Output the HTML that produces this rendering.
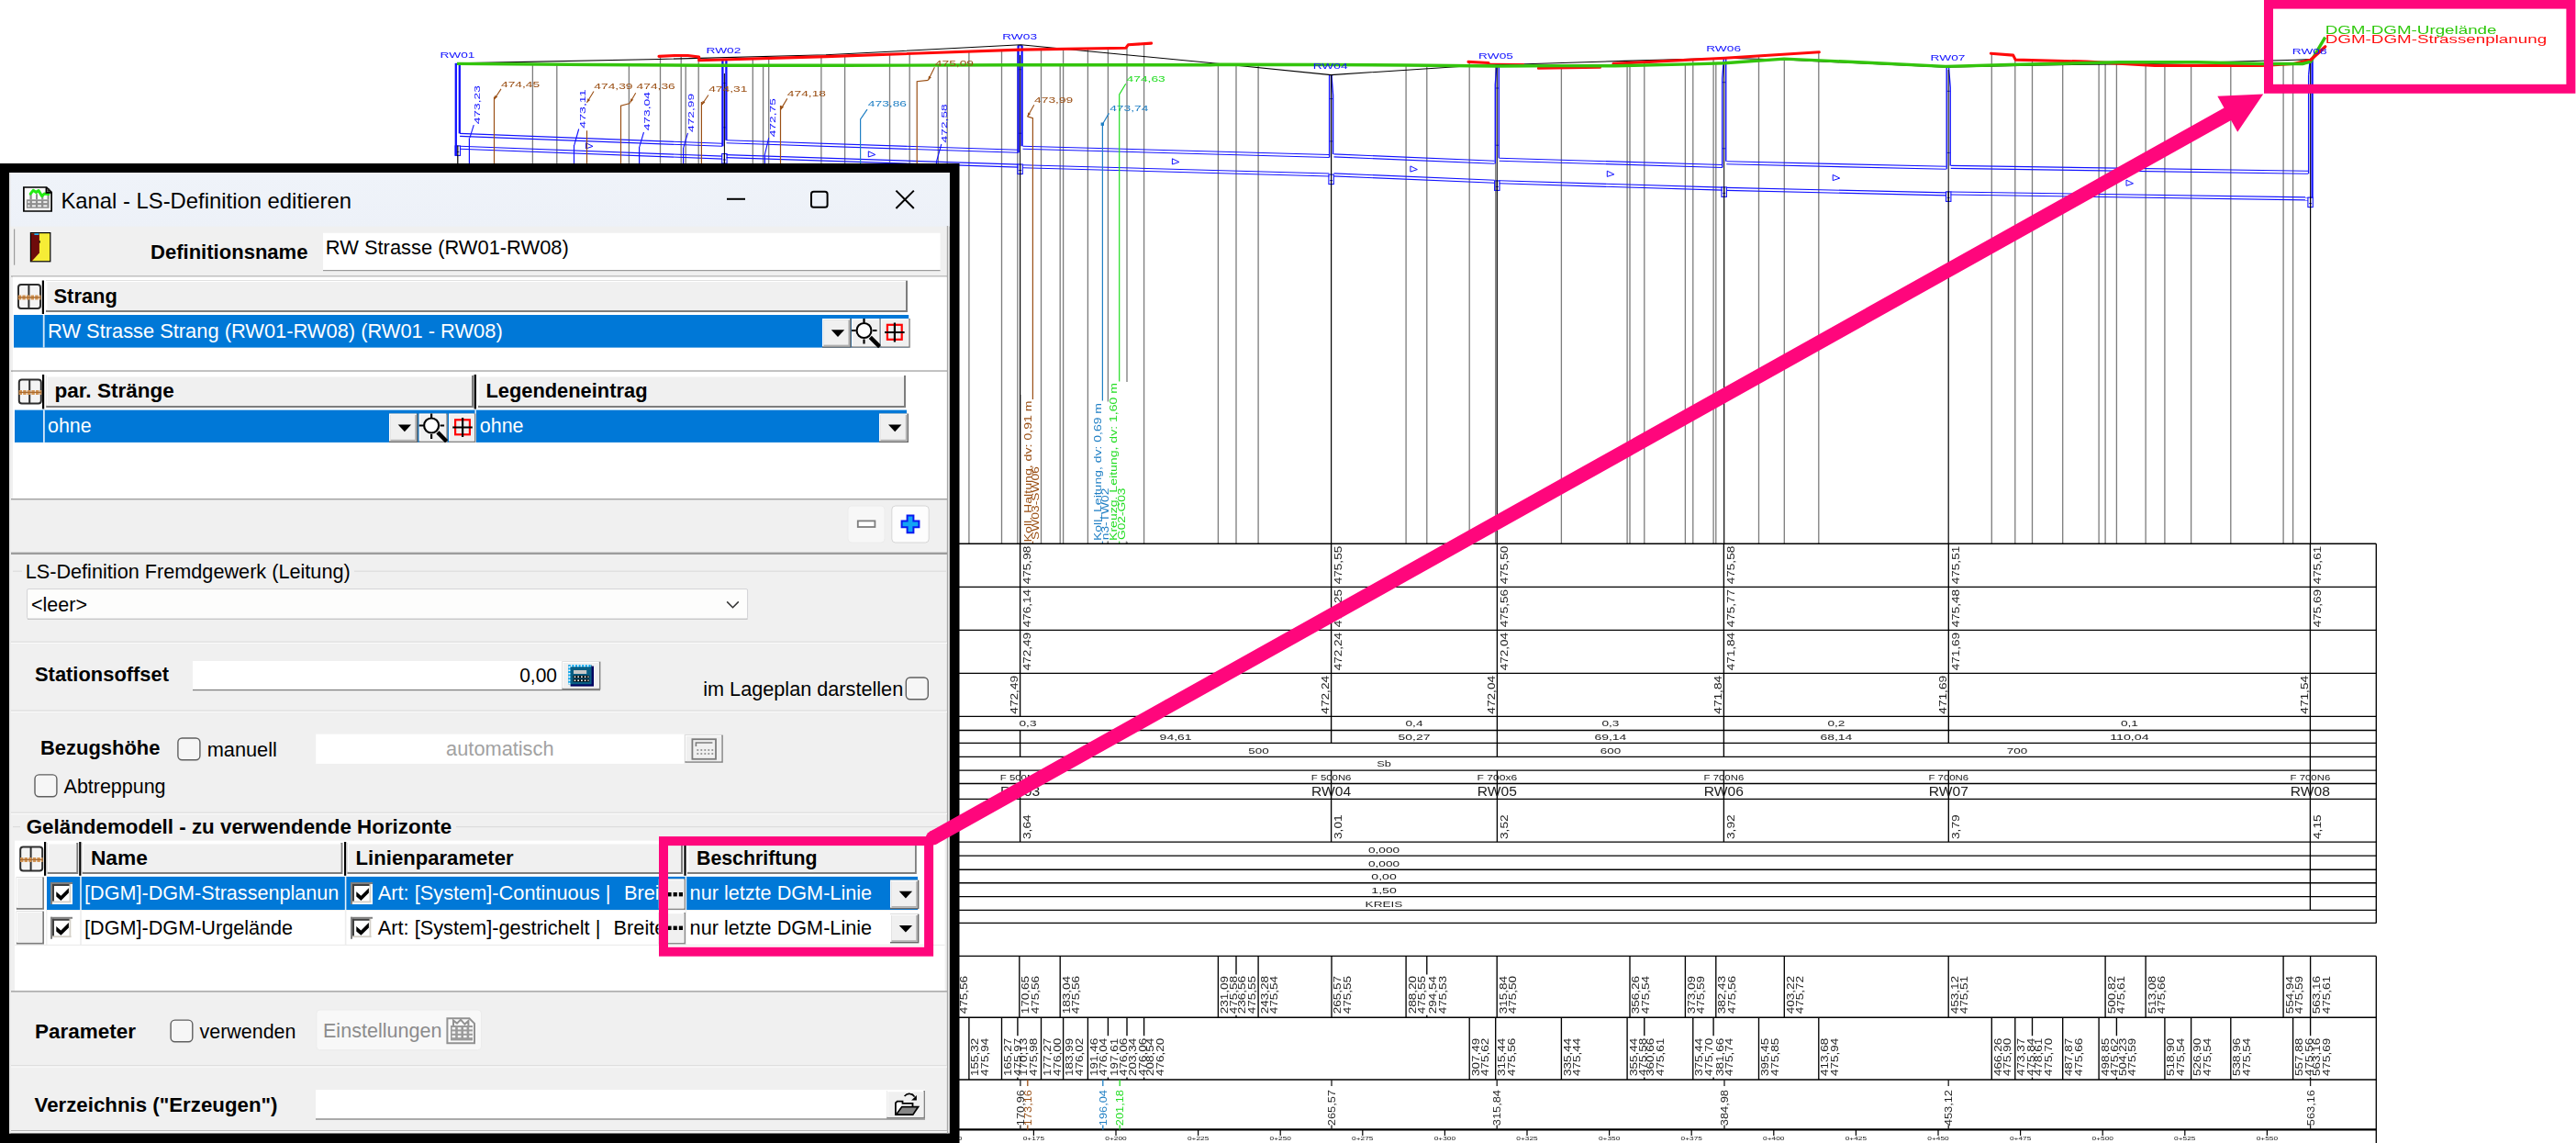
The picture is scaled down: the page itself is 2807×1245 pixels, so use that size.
<!DOCTYPE html>
<html><head><meta charset="utf-8"><title>Kanal - LS-Definition editieren</title>
<style>
html,body{margin:0;padding:0;background:#fff;}
body{width:2807px;height:1245px;overflow:hidden;position:relative;font-family:"Liberation Sans",sans-serif;}
svg{position:absolute;left:0;top:0;display:block;}
svg text{font-family:"Liberation Sans",sans-serif;white-space:pre;}
</style></head><body>
<svg width="2807" height="1245" viewBox="0 0 2807 1245" xml:space="preserve">
<rect x="0" y="0" width="2807" height="1245" fill="#fff"/>
<defs><filter id="ga" x="0" y="0" width="2807" height="1245" filterUnits="userSpaceOnUse"><feOffset dx="0" dy="0"/></filter></defs>
<g id="cad" fill="none" filter="url(#ga)">
<path d="M580.4 70.0V592.2M606.8 70.2V592.2M685.4 70.7V592.2M719.5 61.3V592.2M742.2 60.5V592.2M747.2 71.1V592.2M761.2 61.9V592.2M820.3 64.0V592.2M831.6 71.3V592.2M837.7 63.5V592.2M894.9 61.8V592.2M920.6 60.9V592.2M969.5 59.1V592.2M991.2 58.4V592.2M1022.3 71.0V592.2M1032.2 70.9V592.2M1155.2 70.7V592.2M1327.4 70.4V592.2M1347.0 70.3V592.2M1371.1 70.4V592.2M1532.1 71.0V592.2M1554.8 71.2V592.2M1776.0 71.4V592.2M1836.4 70.0V592.2M1869.8 69.0V592.2M1944.3 64.1V592.2M2294.1 68.2V592.2M2338.1 67.8V592.2M2488.1 69.5V592.2M1055.9 56.1V592.2M1091.5 54.8V592.2M1108.9 54.2V592.2M1134.5 53.8V592.2M1158.6 53.4V592.2M1185.4 52.9V592.2M1207.4 52.6V592.2M1228.0 50.6V592.2M1246.6 47.6V592.2M1601.2 67.5V592.2M1629.7 72.0V592.2M1701.4 73.9V592.2M1773.1 68.6V592.2M1791.8 67.7V592.2M1844.8 65.0V592.2M1867.1 63.8V592.2M1916.5 60.9V592.2M1981.8 56.8V592.2M2170.3 58.3V592.2M2195.8 64.2V592.2M2214.5 65.6V592.2M2247.7 66.4V592.2M2287.1 67.9V592.2M2306.4 69.0V592.2M2358.9 71.4V592.2M2387.6 71.4V592.2M2430.8 71.4V592.2M2498.6 69.5V592.2" stroke="#7c7c7c" stroke-width="1.3" fill="none"/>
<path d="M501.1 145.4L787.1 156.3" stroke="#1212ff" stroke-width="1.15"/>
<path d="M501.1 148.4L787.1 159.3" stroke="#1212ff" stroke-width="1.15"/>
<path d="M501.1 159.2L787.1 170.1" stroke="#1212ff" stroke-width="1.15"/>
<path d="M501.1 162.2L787.1 173.1" stroke="#1212ff" stroke-width="1.15"/>
<path d="M791.5 152.8L1109.6 163.3" stroke="#1212ff" stroke-width="1.15"/>
<path d="M791.5 155.8L1109.6 166.3" stroke="#1212ff" stroke-width="1.15"/>
<path d="M791.5 168.6L1109.6 179.1" stroke="#1212ff" stroke-width="1.15"/>
<path d="M791.5 171.6L1109.6 182.1" stroke="#1212ff" stroke-width="1.15"/>
<path d="M1114.5 159.2L1448.5 168.5" stroke="#1212ff" stroke-width="1.15"/>
<path d="M1114.5 162.2L1448.5 171.5" stroke="#1212ff" stroke-width="1.15"/>
<path d="M1114.5 179.7L1448.5 189.0" stroke="#1212ff" stroke-width="1.15"/>
<path d="M1114.5 182.7L1448.5 192.0" stroke="#1212ff" stroke-width="1.15"/>
<path d="M1453.5 167.9L1628.6 175.3" stroke="#1212ff" stroke-width="1.15"/>
<path d="M1453.5 170.9L1628.6 178.3" stroke="#1212ff" stroke-width="1.15"/>
<path d="M1453.5 188.9L1628.6 196.3" stroke="#1212ff" stroke-width="1.15"/>
<path d="M1453.5 191.9L1628.6 199.3" stroke="#1212ff" stroke-width="1.15"/>
<path d="M1633.6 172.2L1876.9 179.5" stroke="#1212ff" stroke-width="1.15"/>
<path d="M1633.6 175.2L1876.9 182.5" stroke="#1212ff" stroke-width="1.15"/>
<path d="M1633.6 196.8L1876.9 204.1" stroke="#1212ff" stroke-width="1.15"/>
<path d="M1633.6 199.8L1876.9 207.1" stroke="#1212ff" stroke-width="1.15"/>
<path d="M1881.3 175.8L2120.7 181.3" stroke="#1212ff" stroke-width="1.15"/>
<path d="M1881.3 178.8L2120.7 184.3" stroke="#1212ff" stroke-width="1.15"/>
<path d="M1881.3 204.4L2120.7 209.9" stroke="#1212ff" stroke-width="1.15"/>
<path d="M1881.3 207.4L2120.7 212.9" stroke="#1212ff" stroke-width="1.15"/>
<path d="M2125.7 180.4L2515.0 186.3" stroke="#1212ff" stroke-width="1.15"/>
<path d="M2125.7 183.4L2515.0 189.3" stroke="#1212ff" stroke-width="1.15"/>
<path d="M2125.7 209.0L2515.0 214.9" stroke="#1212ff" stroke-width="1.15"/>
<path d="M2125.7 212.0L2515.0 217.9" stroke="#1212ff" stroke-width="1.15"/>
<path d="M638.5 155.7L646.0 159.4L638.5 161.9Z" stroke="#1212ff" stroke-width="1" fill="none"/>
<path d="M946.3 164.8L953.8 168.5L946.3 171.0Z" stroke="#1212ff" stroke-width="1" fill="none"/>
<path d="M1277.4 172.8L1284.9 176.5L1277.4 179.0Z" stroke="#1212ff" stroke-width="1" fill="none"/>
<path d="M1536.9 180.9L1544.4 184.6L1536.9 187.1Z" stroke="#1212ff" stroke-width="1" fill="none"/>
<path d="M1751.3 186.2L1758.8 189.9L1751.3 192.4Z" stroke="#1212ff" stroke-width="1" fill="none"/>
<path d="M1997.2 190.4L2004.7 194.1L1997.2 196.6Z" stroke="#1212ff" stroke-width="1" fill="none"/>
<path d="M2317.0 196.1L2324.5 199.8L2317.0 202.3Z" stroke="#1212ff" stroke-width="1" fill="none"/>
<path d="M496.8 69.4L496.8 169.4" stroke="#1212ff" stroke-width="2.3"/>
<path d="M500.8 69.4L500.8 145.4" stroke="#1212ff" stroke-width="2.3"/>
<path d="M495.8 69.4L501.8 69.4" stroke="#1212ff" stroke-width="1.2"/>
<rect x="496.1" y="158.9" width="5.4" height="10.5" fill="none" stroke="#1212ff" stroke-width="1.1"/>
<path d="M497.3 165.4L500.3 165.4" stroke="#1212ff" stroke-width="1"/>
<path d="M498.8 158.4L498.8 592.2" stroke="#000" stroke-width="1.2"/>
<path d="M787.4 64.5L787.4 159.3" stroke="#1212ff" stroke-width="2.3"/>
<path d="M791.4 64.5L791.4 152.8" stroke="#1212ff" stroke-width="2.3"/>
<path d="M786.9 64.5L791.9 64.5" stroke="#1212ff" stroke-width="1.2"/>
<path d="M787.4 90.5L791.4 90.5" stroke="#1212ff" stroke-width="0.8"/>
<path d="M787.4 138.8L791.4 138.8" stroke="#1212ff" stroke-width="0.8"/>
<rect x="786.7" y="167.5" width="5.4" height="10.5" fill="none" stroke="#1212ff" stroke-width="1.1"/>
<path d="M787.9 174.0L790.9 174.0" stroke="#1212ff" stroke-width="1"/>
<path d="M789.4 167.0L789.4 592.2" stroke="#000" stroke-width="1.2"/>
<path d="M1109.6 49.7L1109.6 166.3" stroke="#1212ff" stroke-width="2.3"/>
<path d="M1113.6 49.7L1113.6 159.2" stroke="#1212ff" stroke-width="2.3"/>
<path d="M1109.1 49.7L1114.1 49.7" stroke="#1212ff" stroke-width="1.2"/>
<path d="M1109.6 75.7L1113.6 75.7" stroke="#1212ff" stroke-width="0.8"/>
<path d="M1109.6 145.2L1113.6 145.2" stroke="#1212ff" stroke-width="0.8"/>
<rect x="1108.9" y="179.0" width="5.4" height="10.5" fill="none" stroke="#1212ff" stroke-width="1.1"/>
<path d="M1110.1 185.5L1113.1 185.5" stroke="#1212ff" stroke-width="1"/>
<path d="M1111.6 178.5L1111.6 592.2" stroke="#000" stroke-width="1.2"/>
<path d="M1448.6 81.6L1448.6 171.5" stroke="#1212ff" stroke-width="1.4"/>
<path d="M1450.9 81.6L1452.6 103.6L1452.6 167.9" stroke="#1212ff" stroke-width="1.4" fill="none"/>
<path d="M1448.1 81.6L1453.1 81.6" stroke="#1212ff" stroke-width="1.2"/>
<path d="M1448.6 107.6L1452.6 107.6" stroke="#1212ff" stroke-width="0.8"/>
<path d="M1448.6 153.9L1452.6 153.9" stroke="#1212ff" stroke-width="0.8"/>
<rect x="1447.9" y="190.1" width="5.4" height="10.5" fill="none" stroke="#1212ff" stroke-width="1.1"/>
<path d="M1449.1 196.6L1452.1 196.6" stroke="#1212ff" stroke-width="1"/>
<path d="M1450.6 81.6L1450.6 592.2" stroke="#000" stroke-width="1.2"/>
<path d="M1631.0 70.0L1629.3 92.0L1629.3 178.3" stroke="#1212ff" stroke-width="1.4" fill="none"/>
<path d="M1633.3 70.0L1633.3 172.2" stroke="#1212ff" stroke-width="1.4"/>
<path d="M1628.8 70.0L1633.8 70.0" stroke="#1212ff" stroke-width="1.2"/>
<path d="M1629.3 96.0L1633.3 96.0" stroke="#1212ff" stroke-width="0.8"/>
<path d="M1629.3 158.2L1633.3 158.2" stroke="#1212ff" stroke-width="0.8"/>
<rect x="1628.6" y="196.9" width="5.4" height="10.5" fill="none" stroke="#1212ff" stroke-width="1.1"/>
<path d="M1629.8 203.4L1632.8 203.4" stroke="#1212ff" stroke-width="1"/>
<path d="M1631.3 196.4L1631.3 592.2" stroke="#000" stroke-width="1.2"/>
<path d="M1878.4 63.7L1876.7 85.7L1876.7 182.5" stroke="#1212ff" stroke-width="1.4" fill="none"/>
<path d="M1880.7 63.7L1880.7 175.8" stroke="#1212ff" stroke-width="1.4"/>
<path d="M1876.2 63.7L1881.2 63.7" stroke="#1212ff" stroke-width="1.2"/>
<path d="M1876.7 89.7L1880.7 89.7" stroke="#1212ff" stroke-width="0.8"/>
<path d="M1876.7 161.8L1880.7 161.8" stroke="#1212ff" stroke-width="0.8"/>
<rect x="1876.0" y="203.9" width="5.4" height="10.5" fill="none" stroke="#1212ff" stroke-width="1.1"/>
<path d="M1877.2 210.4L1880.2 210.4" stroke="#1212ff" stroke-width="1"/>
<path d="M1878.7 203.4L1878.7 592.2" stroke="#000" stroke-width="1.2"/>
<path d="M2121.2 73.3L2121.2 184.3" stroke="#1212ff" stroke-width="1.4"/>
<path d="M2123.5 73.3L2125.2 95.3L2125.2 180.4" stroke="#1212ff" stroke-width="1.4" fill="none"/>
<path d="M2120.7 73.3L2125.7 73.3" stroke="#1212ff" stroke-width="1.2"/>
<path d="M2121.2 99.3L2125.2 99.3" stroke="#1212ff" stroke-width="0.8"/>
<path d="M2121.2 166.4L2125.2 166.4" stroke="#1212ff" stroke-width="0.8"/>
<rect x="2120.5" y="208.9" width="5.4" height="10.5" fill="none" stroke="#1212ff" stroke-width="1.1"/>
<path d="M2121.7 215.4L2124.7 215.4" stroke="#1212ff" stroke-width="1"/>
<path d="M2123.2 208.4L2123.2 592.2" stroke="#000" stroke-width="1.2"/>
<path d="M2515.6 81.9L2515.6 189.3" stroke="#1212ff" stroke-width="1.3"/>
<path d="M2515.6 81.9L2517.1 65.9" stroke="#1212ff" stroke-width="1.3"/>
<path d="M2519.6 65.9L2519.6 215.6" stroke="#1212ff" stroke-width="2.3"/>
<path d="M2514.6 65.9L2520.6 65.9" stroke="#1212ff" stroke-width="1.2"/>
<rect x="2514.9" y="215.1" width="5.4" height="10.5" fill="none" stroke="#1212ff" stroke-width="1.1"/>
<path d="M2516.1 221.6L2519.1 221.6" stroke="#1212ff" stroke-width="1"/>
<path d="M2517.6 214.6L2517.6 592.2" stroke="#000" stroke-width="1.2"/>
<path d="M789.4 80.0L789.4 178.0" stroke="#000" stroke-width="1.0"/>
<path d="M1111.6 60.0L1111.6 190.0" stroke="#000" stroke-width="1.0"/>
<path d="M1631.3 72.0L1631.3 207.0" stroke="#000" stroke-width="1.0"/>
<path d="M1878.7 70.0L1878.7 214.0" stroke="#000" stroke-width="1.0"/>
<path d="M2123.2 76.0L2123.2 219.0" stroke="#000" stroke-width="1.0"/>
<path d="M2517.6 68.0L2517.6 226.0" stroke="#000" stroke-width="1.0"/>
<path d="M498.0 68.9L718.0 64.5L900.0 59.8L1112.3 48.8L1340.0 70.5L1450.4 81.6L1605.6 71.5L1770.0 66.4L1879.4 63.2L1943.8 65.0L2120.2 73.3L2210.0 71.1L2345.7 69.5L2501.4 65.2L2517.0 64.7" stroke="#000" stroke-width="1.1" fill="none"/>
<path d="M718.0 61.4L735.5 60.5L749.5 60.5L761.7 62.0L761.7 65.8L900.0 61.6L1112.3 54.1L1226.7 52.3L1229.3 48.8L1254.6 47.1" stroke="#ff0a0a" stroke-width="3.1" fill="none" stroke-linejoin="round" stroke-linecap="round"/>
<path d="M1600.0 67.4L1622.0 68.5" stroke="#ff0a0a" stroke-width="3.1" fill="none" stroke-linejoin="round" stroke-linecap="round"/>
<path d="M1676.4 74.2L1743.5 73.3" stroke="#ff0a0a" stroke-width="3.1" fill="none" stroke-linejoin="round" stroke-linecap="round"/>
<path d="M1758.0 69.4L1879.4 63.2L1982.3 56.8" stroke="#ff0a0a" stroke-width="3.1" fill="none" stroke-linejoin="round" stroke-linecap="round"/>
<path d="M2169.4 58.2L2193.7 60.1L2196.2 65.1L2273.8 67.1L2348.0 71.4L2465.4 71.4L2499.0 69.5L2518.0 65.2L2533.7 50.8" stroke="#ff0a0a" stroke-width="3.1" fill="none" stroke-linejoin="round" stroke-linecap="round"/>
<path d="M1622.0 69.3L1660.8 69.6" stroke="#ff0a0a" stroke-width="1.2"/>
<path d="M498.0 69.4L650.0 70.5L770.0 71.3L920.0 71.3L1110.0 70.7L1319.0 70.8L1330.0 70.3L1450.0 70.5L1532.0 71.0L1631.0 72.0L1700.0 71.6L1760.0 71.8L1852.0 69.6L1879.0 68.7L1944.0 64.1L2030.0 68.0L2120.0 72.4L2190.0 70.5L2310.0 67.8L2394.0 67.8L2465.0 69.5L2509.0 69.5L2518.0 67.1L2533.7 40.7" stroke="#33c40c" stroke-width="3.4" fill="none" stroke-linejoin="round"/>
<path d="M2518.0 65.2L2533.7 50.8" stroke="#ff0a0a" stroke-width="3.1" fill="none" stroke-linecap="round"/>
<text transform="translate(479.6,62.5)" font-size="9.8" fill="#1212ff" textLength="37.8" lengthAdjust="spacingAndGlyphs">RW01</text>
<text transform="translate(769.5,58.0)" font-size="9.8" fill="#1212ff" textLength="37.8" lengthAdjust="spacingAndGlyphs">RW02</text>
<text transform="translate(1092.2,42.7)" font-size="9.8" fill="#1212ff" textLength="37.8" lengthAdjust="spacingAndGlyphs">RW03</text>
<text transform="translate(1430.7,74.8)" font-size="9.8" fill="#1212ff" textLength="37.8" lengthAdjust="spacingAndGlyphs">RW04</text>
<text transform="translate(1611.1,63.5)" font-size="9.8" fill="#1212ff" textLength="37.8" lengthAdjust="spacingAndGlyphs">RW05</text>
<text transform="translate(1859.2,55.8)" font-size="9.8" fill="#1212ff" textLength="37.8" lengthAdjust="spacingAndGlyphs">RW06</text>
<text transform="translate(2103.6,65.9)" font-size="9.8" fill="#1212ff" textLength="37.8" lengthAdjust="spacingAndGlyphs">RW07</text>
<text transform="translate(2497.8,58.7)" font-size="9.8" fill="#1212ff" textLength="37.8" lengthAdjust="spacingAndGlyphs">RW08</text>
<text transform="translate(2533.7,36.6)" font-size="12.3" fill="#2fc80c" textLength="186.8" lengthAdjust="spacingAndGlyphs">DGM-DGM-Urgelände</text>
<text transform="translate(2533.7,47.4)" font-size="12.3" fill="#ff1010" textLength="241.5" lengthAdjust="spacingAndGlyphs">DGM-DGM-Strassenplanung</text>
</g>
<g id="cadlabels" filter="url(#ga)">
<text transform="translate(546.0,95.1)" font-size="9.2" fill="#9a4f14" textLength="42.2" lengthAdjust="spacingAndGlyphs">474,45</text>
<path d="M546.0 96.9L538.5 108.2" stroke="#9a4f14" stroke-width="1.1"/>
<path d="M538.5 108.2L542.2 105.5L539.5 103.7Z" fill="#9a4f14"/>
<path d="M538.5 105.6L538.5 592.0" stroke="#9a4f14" stroke-width="1.2"/>
<text transform="translate(647.3,97.4)" font-size="9.2" fill="#9a4f14" textLength="42.2" lengthAdjust="spacingAndGlyphs">474,39</text>
<path d="M647.0 99.5L639.5 111.7" stroke="#9a4f14" stroke-width="1.1"/>
<path d="M639.5 111.7L643.1 108.9L640.4 107.2Z" fill="#9a4f14"/>
<path d="M639.5 142.3L639.5 592.0" stroke="#9a4f14" stroke-width="1.2"/>
<text transform="translate(693.6,97.4)" font-size="9.2" fill="#9a4f14" textLength="42.2" lengthAdjust="spacingAndGlyphs">474,36</text>
<path d="M692.7 101.2L686.6 111.7" stroke="#9a4f14" stroke-width="1.1"/>
<path d="M686.6 111.7L690.2 108.8L687.4 107.2Z" fill="#9a4f14"/>
<path d="M686.6 112.5L676.5 115.2L676.5 592.0" stroke="#9a4f14" stroke-width="1.2" fill="none"/>
<text transform="translate(772.2,100.4)" font-size="9.2" fill="#9a4f14" textLength="42.2" lengthAdjust="spacingAndGlyphs">474,31</text>
<path d="M771.9 103.5L764.7 114.3" stroke="#9a4f14" stroke-width="1.1"/>
<path d="M764.7 114.3L768.4 111.6L765.7 109.8Z" fill="#9a4f14"/>
<path d="M764.4 111.0L764.4 592.0" stroke="#9a4f14" stroke-width="1.2"/>
<text transform="translate(857.8,105.0)" font-size="9.2" fill="#9a4f14" textLength="42.2" lengthAdjust="spacingAndGlyphs">474,18</text>
<path d="M857.8 107.4L850.5 119.6" stroke="#9a4f14" stroke-width="1.1"/>
<path d="M850.5 119.6L854.1 116.7L851.3 115.1Z" fill="#9a4f14"/>
<path d="M850.5 115.0L850.5 592.0" stroke="#9a4f14" stroke-width="1.2"/>
<text transform="translate(1018.8,72.0)" font-size="9.2" fill="#9a4f14" textLength="42.2" lengthAdjust="spacingAndGlyphs">475,09</text>
<path d="M1018.4 73.3L1011.5 87.3" stroke="#9a4f14" stroke-width="1.1"/>
<path d="M1011.5 87.3L1014.9 84.2L1011.9 82.7Z" fill="#9a4f14"/>
<path d="M1011.5 87.3L999.2 88.7L999.2 592.0" stroke="#9a4f14" stroke-width="1.2" fill="none"/>
<text transform="translate(1127.1,111.7)" font-size="9.2" fill="#9a4f14" textLength="42.2" lengthAdjust="spacingAndGlyphs">473,99</text>
<path d="M1126.8 114.3L1119.6 126.9" stroke="#9a4f14" stroke-width="1.1"/>
<path d="M1119.6 126.9L1123.1 124.0L1120.3 122.4Z" fill="#9a4f14"/>
<path d="M1119.6 126.9L1125.4 128.7L1125.4 435.0" stroke="#9a4f14" stroke-width="1.2" fill="none"/>
<text transform="translate(945.8,116.0)" font-size="9.2" fill="#1f7fc4" textLength="42.2" lengthAdjust="spacingAndGlyphs">473,86</text>
<path d="M945.0 119.2L937.6 130.0L937.6 592.0" stroke="#1f7fc4" stroke-width="1.2" fill="none"/>
<text transform="translate(1209.2,120.8)" font-size="9.2" fill="#1f7fc4" textLength="42.2" lengthAdjust="spacingAndGlyphs">473,74</text>
<path d="M1208.4 123.4L1201.4 135.3L1201.4 436.4" stroke="#1f7fc4" stroke-width="1.2" fill="none"/>
<rect x="1199.6" y="133.5" width="3.4" height="3.4" fill="#1f7fc4"/>
<text transform="translate(1227.6,88.5)" font-size="9.2" fill="#22dd22" textLength="42.2" lengthAdjust="spacingAndGlyphs">474,63</text>
<path d="M1226.7 91.3L1219.7 103.0L1219.7 415.4" stroke="#22dd22" stroke-width="1.2" fill="none"/>
<text transform="translate(523.2,135.3) rotate(-90)" font-size="9.2" fill="#1212ff" textLength="42.2" lengthAdjust="spacingAndGlyphs">473,23</text>
<path d="M516.3 136.2L511.9 150.2" stroke="#1212ff" stroke-width="1.1"/>
<path d="M511.4 150.2L511.4 592.0" stroke="#1212ff" stroke-width="1.2"/>
<text transform="translate(637.6,139.7) rotate(-90)" font-size="9.2" fill="#1212ff" textLength="42.2" lengthAdjust="spacingAndGlyphs">473,11</text>
<path d="M630.7 140.5L625.8 158.0" stroke="#1212ff" stroke-width="1.1"/>
<path d="M625.5 158.0L625.5 592.0" stroke="#1212ff" stroke-width="1.2"/>
<text transform="translate(708.4,142.3) rotate(-90)" font-size="9.2" fill="#1212ff" textLength="42.2" lengthAdjust="spacingAndGlyphs">473,04</text>
<path d="M701.5 144.0L696.8 159.8" stroke="#1212ff" stroke-width="1.1"/>
<path d="M696.6 159.8L696.6 592.0" stroke="#1212ff" stroke-width="1.2"/>
<text transform="translate(756.4,144.0) rotate(-90)" font-size="9.2" fill="#1212ff" textLength="42.2" lengthAdjust="spacingAndGlyphs">472,99</text>
<path d="M749.5 144.9L744.8 160.6" stroke="#1212ff" stroke-width="1.1"/>
<path d="M744.6 160.6L744.6 592.0" stroke="#1212ff" stroke-width="1.2"/>
<text transform="translate(844.6,149.3) rotate(-90)" font-size="9.2" fill="#1212ff" textLength="42.2" lengthAdjust="spacingAndGlyphs">472,75</text>
<path d="M837.7 150.2L833.0 170.2" stroke="#1212ff" stroke-width="1.1"/>
<path d="M833.4 170.2L833.4 592.0" stroke="#1212ff" stroke-width="1.2"/>
<text transform="translate(1032.3,155.4) rotate(-90)" font-size="9.2" fill="#1212ff" textLength="42.2" lengthAdjust="spacingAndGlyphs">472,58</text>
<path d="M1025.8 157.0L1020.5 176.0" stroke="#1212ff" stroke-width="1.1"/>
<path d="M1020.5 176.0L1020.5 592.0" stroke="#1212ff" stroke-width="1.2"/>
<rect x="1114" y="436" width="19" height="154" fill="#fff"/>
<rect x="1189.5" y="437.5" width="19.5" height="152" fill="#fff"/>
<rect x="1208" y="416" width="21" height="174" fill="#fff"/>
<path d="M1111.6 430.0L1111.6 592.0" stroke="#000" stroke-width="1.2"/>
<text transform="translate(1123.6,590.4) rotate(-90)" font-size="10.6" fill="#9a4f14" textLength="154.0" lengthAdjust="spacingAndGlyphs">Koll. Haltung, dv: 0,91 m</text>
<text transform="translate(1132.0,588.0) rotate(-90)" font-size="10.6" fill="#9a4f14" textLength="80.0" lengthAdjust="spacingAndGlyphs">SW03-SW06</text>
<text transform="translate(1199.8,589.0) rotate(-90)" font-size="10.6" fill="#1f7fc4" textLength="150.0" lengthAdjust="spacingAndGlyphs">Koll. Leitung, dv: 0,69 m</text>
<text transform="translate(1208.2,588.2) rotate(-90)" font-size="10.6" fill="#1f7fc4" textLength="56.5" lengthAdjust="spacingAndGlyphs">n3-TW02</text>
<text transform="translate(1217.4,589.0) rotate(-90)" font-size="10.6" fill="#22dd22" textLength="172.0" lengthAdjust="spacingAndGlyphs">Kreuzg. Leitung, dv: 1,60 m</text>
<text transform="translate(1225.8,588.0) rotate(-90)" font-size="10.6" fill="#22dd22" textLength="56.5" lengthAdjust="spacingAndGlyphs">G02-G03</text>
<path d="M1207.2 589.5L1207.2 592.0" stroke="#7c7c7c" stroke-width="1.1"/>
<path d="M1227.3 589.5L1227.3 592.0" stroke="#7c7c7c" stroke-width="1.1"/>
<path d="M1125.4 589.5L1125.4 592.0" stroke="#9a4f14" stroke-width="1.1"/>
<path d="M1201.4 589.5L1201.4 592.0" stroke="#1f7fc4" stroke-width="1.1"/>
<path d="M1219.7 589.5L1219.7 592.0" stroke="#22dd22" stroke-width="1.1"/>
</g>
<g id="table" filter="url(#ga)">
<path d="M400 592.2H2589.3M400 639.3H2589.3M400 686.4H2589.3M400 733.4H2589.3M400 780.3H2589.3M400 795.5H2589.3M400 809.3H2589.3M400 824.3H2589.3M400 839.1H2589.3M400 853.5H2589.3M400 870.3H2589.3M400 917.1H2589.3M400 932.1H2589.3M400 947.2H2589.3M400 961.7H2589.3M400 976.6H2589.3M400 991.3H2589.3M400 1005.4H2589.3M2589.3 592.2V1005.4M498.8 592.2V824.3M498.8 839.1V917.1M789.4 592.2V809.3M789.4 839.1V917.1M1111.6 592.2V780.3M1111.6 795.5V824.3M1111.6 839.1V917.1M1450.6 592.2V809.3M1450.6 839.1V917.1M1631.4 592.2V824.3M1631.4 839.1V917.1M1878.4 592.2V824.3M1878.4 839.1V917.1M2123.3 592.2V809.3M2123.3 839.1V917.1M2517.4 592.2V991.3" stroke="#000" stroke-width="1.35" fill="none"/>
<text transform="translate(1123.3,636.2) rotate(-90)" font-size="10.2" fill="#1c1c1c" textLength="41.4" lengthAdjust="spacingAndGlyphs">475,98</text>
<text transform="translate(1123.3,683.3) rotate(-90)" font-size="10.2" fill="#1c1c1c" textLength="41.4" lengthAdjust="spacingAndGlyphs">476,14</text>
<text transform="translate(1123.3,730.3) rotate(-90)" font-size="10.2" fill="#1c1c1c" textLength="41.4" lengthAdjust="spacingAndGlyphs">472,49</text>
<text transform="translate(1109.3,777.7) rotate(-90)" font-size="10.2" fill="#1c1c1c" textLength="41.8" lengthAdjust="spacingAndGlyphs">472,49</text>
<text transform="translate(1123.3,914.0) rotate(-90)" font-size="10.2" fill="#1c1c1c" textLength="26.6" lengthAdjust="spacingAndGlyphs">3,64</text>
<text transform="translate(1111.6,849.8)" font-size="8.3" fill="#1c1c1c" textLength="43.7" lengthAdjust="spacingAndGlyphs" text-anchor="middle">F 500N6</text>
<text transform="translate(1111.6,866.9)" font-size="14.2" fill="#1c1c1c" textLength="43.1" lengthAdjust="spacingAndGlyphs" text-anchor="middle">RW03</text>
<text transform="translate(1462.3,636.2) rotate(-90)" font-size="10.2" fill="#1c1c1c" textLength="41.4" lengthAdjust="spacingAndGlyphs">475,55</text>
<text transform="translate(1462.3,683.3) rotate(-90)" font-size="10.2" fill="#1c1c1c" textLength="41.4" lengthAdjust="spacingAndGlyphs">475,25</text>
<text transform="translate(1462.3,730.3) rotate(-90)" font-size="10.2" fill="#1c1c1c" textLength="41.4" lengthAdjust="spacingAndGlyphs">472,24</text>
<text transform="translate(1448.3,777.7) rotate(-90)" font-size="10.2" fill="#1c1c1c" textLength="41.8" lengthAdjust="spacingAndGlyphs">472,24</text>
<text transform="translate(1462.3,914.0) rotate(-90)" font-size="10.2" fill="#1c1c1c" textLength="26.6" lengthAdjust="spacingAndGlyphs">3,01</text>
<text transform="translate(1450.6,849.8)" font-size="8.3" fill="#1c1c1c" textLength="43.7" lengthAdjust="spacingAndGlyphs" text-anchor="middle">F 500N6</text>
<text transform="translate(1450.6,866.9)" font-size="14.2" fill="#1c1c1c" textLength="43.1" lengthAdjust="spacingAndGlyphs" text-anchor="middle">RW04</text>
<text transform="translate(1643.1,636.2) rotate(-90)" font-size="10.2" fill="#1c1c1c" textLength="41.4" lengthAdjust="spacingAndGlyphs">475,50</text>
<text transform="translate(1643.1,683.3) rotate(-90)" font-size="10.2" fill="#1c1c1c" textLength="41.4" lengthAdjust="spacingAndGlyphs">475,56</text>
<text transform="translate(1643.1,730.3) rotate(-90)" font-size="10.2" fill="#1c1c1c" textLength="41.4" lengthAdjust="spacingAndGlyphs">472,04</text>
<text transform="translate(1629.1,777.7) rotate(-90)" font-size="10.2" fill="#1c1c1c" textLength="41.8" lengthAdjust="spacingAndGlyphs">472,04</text>
<text transform="translate(1643.1,914.0) rotate(-90)" font-size="10.2" fill="#1c1c1c" textLength="26.6" lengthAdjust="spacingAndGlyphs">3,52</text>
<text transform="translate(1631.4,849.8)" font-size="8.3" fill="#1c1c1c" textLength="43.7" lengthAdjust="spacingAndGlyphs" text-anchor="middle">F 700x6</text>
<text transform="translate(1631.4,866.9)" font-size="14.2" fill="#1c1c1c" textLength="43.1" lengthAdjust="spacingAndGlyphs" text-anchor="middle">RW05</text>
<text transform="translate(1890.1,636.2) rotate(-90)" font-size="10.2" fill="#1c1c1c" textLength="41.4" lengthAdjust="spacingAndGlyphs">475,58</text>
<text transform="translate(1890.1,683.3) rotate(-90)" font-size="10.2" fill="#1c1c1c" textLength="41.4" lengthAdjust="spacingAndGlyphs">475,77</text>
<text transform="translate(1890.1,730.3) rotate(-90)" font-size="10.2" fill="#1c1c1c" textLength="41.4" lengthAdjust="spacingAndGlyphs">471,84</text>
<text transform="translate(1876.1,777.7) rotate(-90)" font-size="10.2" fill="#1c1c1c" textLength="41.8" lengthAdjust="spacingAndGlyphs">471,84</text>
<text transform="translate(1890.1,914.0) rotate(-90)" font-size="10.2" fill="#1c1c1c" textLength="26.6" lengthAdjust="spacingAndGlyphs">3,92</text>
<text transform="translate(1878.4,849.8)" font-size="8.3" fill="#1c1c1c" textLength="43.7" lengthAdjust="spacingAndGlyphs" text-anchor="middle">F 700N6</text>
<text transform="translate(1878.4,866.9)" font-size="14.2" fill="#1c1c1c" textLength="43.1" lengthAdjust="spacingAndGlyphs" text-anchor="middle">RW06</text>
<text transform="translate(2135.0,636.2) rotate(-90)" font-size="10.2" fill="#1c1c1c" textLength="41.4" lengthAdjust="spacingAndGlyphs">475,51</text>
<text transform="translate(2135.0,683.3) rotate(-90)" font-size="10.2" fill="#1c1c1c" textLength="41.4" lengthAdjust="spacingAndGlyphs">475,48</text>
<text transform="translate(2135.0,730.3) rotate(-90)" font-size="10.2" fill="#1c1c1c" textLength="41.4" lengthAdjust="spacingAndGlyphs">471,69</text>
<text transform="translate(2121.0,777.7) rotate(-90)" font-size="10.2" fill="#1c1c1c" textLength="41.8" lengthAdjust="spacingAndGlyphs">471,69</text>
<text transform="translate(2135.0,914.0) rotate(-90)" font-size="10.2" fill="#1c1c1c" textLength="26.6" lengthAdjust="spacingAndGlyphs">3,79</text>
<text transform="translate(2123.3,849.8)" font-size="8.3" fill="#1c1c1c" textLength="43.7" lengthAdjust="spacingAndGlyphs" text-anchor="middle">F 700N6</text>
<text transform="translate(2123.3,866.9)" font-size="14.2" fill="#1c1c1c" textLength="43.1" lengthAdjust="spacingAndGlyphs" text-anchor="middle">RW07</text>
<text transform="translate(2529.1,636.2) rotate(-90)" font-size="10.2" fill="#1c1c1c" textLength="41.4" lengthAdjust="spacingAndGlyphs">475,61</text>
<text transform="translate(2529.1,683.3) rotate(-90)" font-size="10.2" fill="#1c1c1c" textLength="41.4" lengthAdjust="spacingAndGlyphs">475,69</text>
<text transform="translate(2515.1,777.7) rotate(-90)" font-size="10.2" fill="#1c1c1c" textLength="41.8" lengthAdjust="spacingAndGlyphs">471,54</text>
<text transform="translate(2529.1,914.0) rotate(-90)" font-size="10.2" fill="#1c1c1c" textLength="26.6" lengthAdjust="spacingAndGlyphs">4,15</text>
<text transform="translate(2517.4,849.8)" font-size="8.3" fill="#1c1c1c" textLength="43.7" lengthAdjust="spacingAndGlyphs" text-anchor="middle">F 700N6</text>
<text transform="translate(2517.4,866.9)" font-size="14.2" fill="#1c1c1c" textLength="43.1" lengthAdjust="spacingAndGlyphs" text-anchor="middle">RW08</text>
<text transform="translate(1110.5,791.0)" font-size="9.7" fill="#1c1c1c" textLength="19.0" lengthAdjust="spacingAndGlyphs">0,3</text>
<text transform="translate(1541.0,791.0)" font-size="9.7" fill="#1c1c1c" textLength="19.0" lengthAdjust="spacingAndGlyphs" text-anchor="middle">0,4</text>
<text transform="translate(1754.9,791.0)" font-size="9.7" fill="#1c1c1c" textLength="19.0" lengthAdjust="spacingAndGlyphs" text-anchor="middle">0,3</text>
<text transform="translate(2000.9,791.0)" font-size="9.7" fill="#1c1c1c" textLength="19.0" lengthAdjust="spacingAndGlyphs" text-anchor="middle">0,2</text>
<text transform="translate(2320.4,791.0)" font-size="9.7" fill="#1c1c1c" textLength="19.0" lengthAdjust="spacingAndGlyphs" text-anchor="middle">0,1</text>
<text transform="translate(1281.1,805.9)" font-size="9.7" fill="#1c1c1c" textLength="35.0" lengthAdjust="spacingAndGlyphs" text-anchor="middle">94,61</text>
<text transform="translate(1541.0,805.9)" font-size="9.7" fill="#1c1c1c" textLength="35.0" lengthAdjust="spacingAndGlyphs" text-anchor="middle">50,27</text>
<text transform="translate(1754.9,805.9)" font-size="9.7" fill="#1c1c1c" textLength="35.0" lengthAdjust="spacingAndGlyphs" text-anchor="middle">69,14</text>
<text transform="translate(2000.9,805.9)" font-size="9.7" fill="#1c1c1c" textLength="35.0" lengthAdjust="spacingAndGlyphs" text-anchor="middle">68,14</text>
<text transform="translate(2320.4,805.9)" font-size="9.7" fill="#1c1c1c" textLength="42.5" lengthAdjust="spacingAndGlyphs" text-anchor="middle">110,04</text>
<text transform="translate(1371.5,820.7)" font-size="9.7" fill="#1c1c1c" textLength="22.4" lengthAdjust="spacingAndGlyphs" text-anchor="middle">500</text>
<text transform="translate(1754.9,820.7)" font-size="9.7" fill="#1c1c1c" textLength="22.4" lengthAdjust="spacingAndGlyphs" text-anchor="middle">600</text>
<text transform="translate(2197.9,820.7)" font-size="9.7" fill="#1c1c1c" textLength="22.4" lengthAdjust="spacingAndGlyphs" text-anchor="middle">700</text>
<text transform="translate(1508.0,835.2)" font-size="9.7" fill="#1c1c1c" textLength="15.7" lengthAdjust="spacingAndGlyphs" text-anchor="middle">Sb</text>
<text transform="translate(1508.0,928.5)" font-size="9.7" fill="#1c1c1c" textLength="34.2" lengthAdjust="spacingAndGlyphs" text-anchor="middle">0,000</text>
<text transform="translate(1508.0,943.6)" font-size="9.7" fill="#1c1c1c" textLength="34.2" lengthAdjust="spacingAndGlyphs" text-anchor="middle">0,000</text>
<text transform="translate(1508.0,958.1)" font-size="9.7" fill="#1c1c1c" textLength="27.4" lengthAdjust="spacingAndGlyphs" text-anchor="middle">0,00</text>
<text transform="translate(1508.0,973.0)" font-size="9.7" fill="#1c1c1c" textLength="27.4" lengthAdjust="spacingAndGlyphs" text-anchor="middle">1,50</text>
<text transform="translate(1508.0,987.7)" font-size="9.7" fill="#1c1c1c" textLength="40.9" lengthAdjust="spacingAndGlyphs" text-anchor="middle">KREIS</text>
<path d="M400 1041.4H2589.3M400 1108.2H2589.3M400 1176.0H2589.3M2589.3 1041.4V1246" stroke="#000" stroke-width="1.35" fill="none"/>
<path d="M400 1230.4H2589.3" stroke="#000" stroke-width="2.3" fill="none"/>
<text transform="translate(1042.9,1104.2) rotate(-90)" font-size="10.3" fill="#1c1c1c" textLength="41.3" lengthAdjust="spacingAndGlyphs">148,80</text>
<text transform="translate(1053.5,1104.2) rotate(-90)" font-size="10.3" fill="#1c1c1c" textLength="41.3" lengthAdjust="spacingAndGlyphs">475,56</text>
<text transform="translate(1121.2,1104.2) rotate(-90)" font-size="10.3" fill="#1c1c1c" textLength="41.3" lengthAdjust="spacingAndGlyphs">170,65</text>
<text transform="translate(1131.8,1104.2) rotate(-90)" font-size="10.3" fill="#1c1c1c" textLength="41.3" lengthAdjust="spacingAndGlyphs">475,56</text>
<text transform="translate(1165.6,1104.2) rotate(-90)" font-size="10.3" fill="#1c1c1c" textLength="41.3" lengthAdjust="spacingAndGlyphs">183,04</text>
<text transform="translate(1176.2,1104.2) rotate(-90)" font-size="10.3" fill="#1c1c1c" textLength="41.3" lengthAdjust="spacingAndGlyphs">475,56</text>
<text transform="translate(1337.8,1104.2) rotate(-90)" font-size="10.3" fill="#1c1c1c" textLength="41.3" lengthAdjust="spacingAndGlyphs">231,09</text>
<text transform="translate(1348.4,1104.2) rotate(-90)" font-size="10.3" fill="#1c1c1c" textLength="41.3" lengthAdjust="spacingAndGlyphs">475,58</text>
<text transform="translate(1357.4,1104.2) rotate(-90)" font-size="10.3" fill="#1c1c1c" textLength="41.3" lengthAdjust="spacingAndGlyphs">236,56</text>
<text transform="translate(1368.0,1104.2) rotate(-90)" font-size="10.3" fill="#1c1c1c" textLength="41.3" lengthAdjust="spacingAndGlyphs">475,55</text>
<text transform="translate(1381.5,1104.2) rotate(-90)" font-size="10.3" fill="#1c1c1c" textLength="41.3" lengthAdjust="spacingAndGlyphs">243,28</text>
<text transform="translate(1392.1,1104.2) rotate(-90)" font-size="10.3" fill="#1c1c1c" textLength="41.3" lengthAdjust="spacingAndGlyphs">475,54</text>
<text transform="translate(1461.4,1104.2) rotate(-90)" font-size="10.3" fill="#1c1c1c" textLength="41.3" lengthAdjust="spacingAndGlyphs">265,57</text>
<text transform="translate(1472.0,1104.2) rotate(-90)" font-size="10.3" fill="#1c1c1c" textLength="41.3" lengthAdjust="spacingAndGlyphs">475,55</text>
<text transform="translate(1542.5,1104.2) rotate(-90)" font-size="10.3" fill="#1c1c1c" textLength="41.3" lengthAdjust="spacingAndGlyphs">288,20</text>
<text transform="translate(1553.1,1104.2) rotate(-90)" font-size="10.3" fill="#1c1c1c" textLength="41.3" lengthAdjust="spacingAndGlyphs">475,55</text>
<text transform="translate(1565.2,1104.2) rotate(-90)" font-size="10.3" fill="#1c1c1c" textLength="41.3" lengthAdjust="spacingAndGlyphs">294,54</text>
<text transform="translate(1575.8,1104.2) rotate(-90)" font-size="10.3" fill="#1c1c1c" textLength="41.3" lengthAdjust="spacingAndGlyphs">475,53</text>
<text transform="translate(1641.6,1104.2) rotate(-90)" font-size="10.3" fill="#1c1c1c" textLength="41.3" lengthAdjust="spacingAndGlyphs">315,84</text>
<text transform="translate(1652.2,1104.2) rotate(-90)" font-size="10.3" fill="#1c1c1c" textLength="41.3" lengthAdjust="spacingAndGlyphs">475,50</text>
<text transform="translate(1786.4,1104.2) rotate(-90)" font-size="10.3" fill="#1c1c1c" textLength="41.3" lengthAdjust="spacingAndGlyphs">356,26</text>
<text transform="translate(1797.0,1104.2) rotate(-90)" font-size="10.3" fill="#1c1c1c" textLength="41.3" lengthAdjust="spacingAndGlyphs">475,54</text>
<text transform="translate(1846.8,1104.2) rotate(-90)" font-size="10.3" fill="#1c1c1c" textLength="41.3" lengthAdjust="spacingAndGlyphs">373,09</text>
<text transform="translate(1857.4,1104.2) rotate(-90)" font-size="10.3" fill="#1c1c1c" textLength="41.3" lengthAdjust="spacingAndGlyphs">475,59</text>
<text transform="translate(1880.2,1104.2) rotate(-90)" font-size="10.3" fill="#1c1c1c" textLength="41.3" lengthAdjust="spacingAndGlyphs">382,43</text>
<text transform="translate(1890.8,1104.2) rotate(-90)" font-size="10.3" fill="#1c1c1c" textLength="41.3" lengthAdjust="spacingAndGlyphs">475,56</text>
<text transform="translate(1954.7,1104.2) rotate(-90)" font-size="10.3" fill="#1c1c1c" textLength="41.3" lengthAdjust="spacingAndGlyphs">403,22</text>
<text transform="translate(1965.3,1104.2) rotate(-90)" font-size="10.3" fill="#1c1c1c" textLength="41.3" lengthAdjust="spacingAndGlyphs">475,72</text>
<text transform="translate(2133.6,1104.2) rotate(-90)" font-size="10.3" fill="#1c1c1c" textLength="41.3" lengthAdjust="spacingAndGlyphs">453,12</text>
<text transform="translate(2144.2,1104.2) rotate(-90)" font-size="10.3" fill="#1c1c1c" textLength="41.3" lengthAdjust="spacingAndGlyphs">475,51</text>
<text transform="translate(2304.5,1104.2) rotate(-90)" font-size="10.3" fill="#1c1c1c" textLength="41.3" lengthAdjust="spacingAndGlyphs">500,82</text>
<text transform="translate(2315.1,1104.2) rotate(-90)" font-size="10.3" fill="#1c1c1c" textLength="41.3" lengthAdjust="spacingAndGlyphs">475,61</text>
<text transform="translate(2348.5,1104.2) rotate(-90)" font-size="10.3" fill="#1c1c1c" textLength="41.3" lengthAdjust="spacingAndGlyphs">513,08</text>
<text transform="translate(2359.1,1104.2) rotate(-90)" font-size="10.3" fill="#1c1c1c" textLength="41.3" lengthAdjust="spacingAndGlyphs">475,66</text>
<text transform="translate(2498.5,1104.2) rotate(-90)" font-size="10.3" fill="#1c1c1c" textLength="41.3" lengthAdjust="spacingAndGlyphs">554,94</text>
<text transform="translate(2509.1,1104.2) rotate(-90)" font-size="10.3" fill="#1c1c1c" textLength="41.3" lengthAdjust="spacingAndGlyphs">475,59</text>
<text transform="translate(2528.0,1104.2) rotate(-90)" font-size="10.3" fill="#1c1c1c" textLength="41.3" lengthAdjust="spacingAndGlyphs">563,16</text>
<text transform="translate(2538.6,1104.2) rotate(-90)" font-size="10.3" fill="#1c1c1c" textLength="41.3" lengthAdjust="spacingAndGlyphs">475,61</text>
<path d="M1032.5 1041.4V1108.2M1110.8 1041.4V1108.2M1155.2 1041.4V1108.2M1327.4 1041.4V1108.2M1347.0 1041.4V1061.4M1347.0 1105.7V1108.2M1371.1 1041.4V1108.2M1451.0 1041.4V1108.2M1532.1 1041.4V1108.2M1554.8 1041.4V1061.4M1554.8 1105.7V1108.2M1631.2 1041.4V1108.2M1776.0 1041.4V1108.2M1836.4 1041.4V1108.2M1869.8 1041.4V1108.2M1944.3 1041.4V1108.2M2123.2 1041.4V1108.2M2294.1 1041.4V1108.2M2338.1 1041.4V1108.2M2488.1 1041.4V1108.2M2517.6 1041.4V1108.2" stroke="#000" stroke-width="1.35" fill="none"/>
<text transform="translate(1066.3,1172.0) rotate(-90)" font-size="10.3" fill="#1c1c1c" textLength="41.3" lengthAdjust="spacingAndGlyphs">155,32</text>
<text transform="translate(1076.9,1172.0) rotate(-90)" font-size="10.3" fill="#1c1c1c" textLength="41.3" lengthAdjust="spacingAndGlyphs">475,94</text>
<text transform="translate(1101.9,1172.0) rotate(-90)" font-size="10.3" fill="#1c1c1c" textLength="41.3" lengthAdjust="spacingAndGlyphs">165,27</text>
<text transform="translate(1112.5,1172.0) rotate(-90)" font-size="10.3" fill="#1c1c1c" textLength="41.3" lengthAdjust="spacingAndGlyphs">475,97</text>
<text transform="translate(1119.3,1172.0) rotate(-90)" font-size="10.3" fill="#1c1c1c" textLength="41.3" lengthAdjust="spacingAndGlyphs">170,13</text>
<text transform="translate(1129.9,1172.0) rotate(-90)" font-size="10.3" fill="#1c1c1c" textLength="41.3" lengthAdjust="spacingAndGlyphs">475,98</text>
<text transform="translate(1144.9,1172.0) rotate(-90)" font-size="10.3" fill="#1c1c1c" textLength="41.3" lengthAdjust="spacingAndGlyphs">177,27</text>
<text transform="translate(1155.5,1172.0) rotate(-90)" font-size="10.3" fill="#1c1c1c" textLength="41.3" lengthAdjust="spacingAndGlyphs">476,00</text>
<text transform="translate(1169.0,1172.0) rotate(-90)" font-size="10.3" fill="#1c1c1c" textLength="41.3" lengthAdjust="spacingAndGlyphs">183,99</text>
<text transform="translate(1179.6,1172.0) rotate(-90)" font-size="10.3" fill="#1c1c1c" textLength="41.3" lengthAdjust="spacingAndGlyphs">476,02</text>
<text transform="translate(1195.8,1172.0) rotate(-90)" font-size="10.3" fill="#1c1c1c" textLength="41.3" lengthAdjust="spacingAndGlyphs">191,46</text>
<text transform="translate(1206.4,1172.0) rotate(-90)" font-size="10.3" fill="#1c1c1c" textLength="41.3" lengthAdjust="spacingAndGlyphs">476,04</text>
<text transform="translate(1217.8,1172.0) rotate(-90)" font-size="10.3" fill="#1c1c1c" textLength="41.3" lengthAdjust="spacingAndGlyphs">197,61</text>
<text transform="translate(1228.4,1172.0) rotate(-90)" font-size="10.3" fill="#1c1c1c" textLength="41.3" lengthAdjust="spacingAndGlyphs">476,06</text>
<text transform="translate(1238.4,1172.0) rotate(-90)" font-size="10.3" fill="#1c1c1c" textLength="41.3" lengthAdjust="spacingAndGlyphs">203,34</text>
<text transform="translate(1249.0,1172.0) rotate(-90)" font-size="10.3" fill="#1c1c1c" textLength="41.3" lengthAdjust="spacingAndGlyphs">476,06</text>
<text transform="translate(1257.0,1172.0) rotate(-90)" font-size="10.3" fill="#1c1c1c" textLength="41.3" lengthAdjust="spacingAndGlyphs">208,54</text>
<text transform="translate(1267.6,1172.0) rotate(-90)" font-size="10.3" fill="#1c1c1c" textLength="41.3" lengthAdjust="spacingAndGlyphs">476,20</text>
<text transform="translate(1611.6,1172.0) rotate(-90)" font-size="10.3" fill="#1c1c1c" textLength="41.3" lengthAdjust="spacingAndGlyphs">307,49</text>
<text transform="translate(1622.2,1172.0) rotate(-90)" font-size="10.3" fill="#1c1c1c" textLength="41.3" lengthAdjust="spacingAndGlyphs">475,62</text>
<text transform="translate(1640.1,1172.0) rotate(-90)" font-size="10.3" fill="#1c1c1c" textLength="41.3" lengthAdjust="spacingAndGlyphs">315,44</text>
<text transform="translate(1650.7,1172.0) rotate(-90)" font-size="10.3" fill="#1c1c1c" textLength="41.3" lengthAdjust="spacingAndGlyphs">475,56</text>
<text transform="translate(1711.8,1172.0) rotate(-90)" font-size="10.3" fill="#1c1c1c" textLength="41.3" lengthAdjust="spacingAndGlyphs">335,44</text>
<text transform="translate(1722.4,1172.0) rotate(-90)" font-size="10.3" fill="#1c1c1c" textLength="41.3" lengthAdjust="spacingAndGlyphs">475,44</text>
<text transform="translate(1783.5,1172.0) rotate(-90)" font-size="10.3" fill="#1c1c1c" textLength="41.3" lengthAdjust="spacingAndGlyphs">355,44</text>
<text transform="translate(1794.1,1172.0) rotate(-90)" font-size="10.3" fill="#1c1c1c" textLength="41.3" lengthAdjust="spacingAndGlyphs">475,58</text>
<text transform="translate(1802.2,1172.0) rotate(-90)" font-size="10.3" fill="#1c1c1c" textLength="41.3" lengthAdjust="spacingAndGlyphs">360,66</text>
<text transform="translate(1812.8,1172.0) rotate(-90)" font-size="10.3" fill="#1c1c1c" textLength="41.3" lengthAdjust="spacingAndGlyphs">475,61</text>
<text transform="translate(1855.2,1172.0) rotate(-90)" font-size="10.3" fill="#1c1c1c" textLength="41.3" lengthAdjust="spacingAndGlyphs">375,44</text>
<text transform="translate(1865.8,1172.0) rotate(-90)" font-size="10.3" fill="#1c1c1c" textLength="41.3" lengthAdjust="spacingAndGlyphs">475,70</text>
<text transform="translate(1877.5,1172.0) rotate(-90)" font-size="10.3" fill="#1c1c1c" textLength="41.3" lengthAdjust="spacingAndGlyphs">381,66</text>
<text transform="translate(1888.1,1172.0) rotate(-90)" font-size="10.3" fill="#1c1c1c" textLength="41.3" lengthAdjust="spacingAndGlyphs">475,74</text>
<text transform="translate(1926.9,1172.0) rotate(-90)" font-size="10.3" fill="#1c1c1c" textLength="41.3" lengthAdjust="spacingAndGlyphs">395,45</text>
<text transform="translate(1937.5,1172.0) rotate(-90)" font-size="10.3" fill="#1c1c1c" textLength="41.3" lengthAdjust="spacingAndGlyphs">475,85</text>
<text transform="translate(1992.2,1172.0) rotate(-90)" font-size="10.3" fill="#1c1c1c" textLength="41.3" lengthAdjust="spacingAndGlyphs">413,68</text>
<text transform="translate(2002.8,1172.0) rotate(-90)" font-size="10.3" fill="#1c1c1c" textLength="41.3" lengthAdjust="spacingAndGlyphs">475,94</text>
<text transform="translate(2180.7,1172.0) rotate(-90)" font-size="10.3" fill="#1c1c1c" textLength="41.3" lengthAdjust="spacingAndGlyphs">466,26</text>
<text transform="translate(2191.3,1172.0) rotate(-90)" font-size="10.3" fill="#1c1c1c" textLength="41.3" lengthAdjust="spacingAndGlyphs">475,90</text>
<text transform="translate(2206.2,1172.0) rotate(-90)" font-size="10.3" fill="#1c1c1c" textLength="41.3" lengthAdjust="spacingAndGlyphs">473,37</text>
<text transform="translate(2216.8,1172.0) rotate(-90)" font-size="10.3" fill="#1c1c1c" textLength="41.3" lengthAdjust="spacingAndGlyphs">475,84</text>
<text transform="translate(2224.9,1172.0) rotate(-90)" font-size="10.3" fill="#1c1c1c" textLength="41.3" lengthAdjust="spacingAndGlyphs">478,61</text>
<text transform="translate(2235.5,1172.0) rotate(-90)" font-size="10.3" fill="#1c1c1c" textLength="41.3" lengthAdjust="spacingAndGlyphs">475,70</text>
<text transform="translate(2258.1,1172.0) rotate(-90)" font-size="10.3" fill="#1c1c1c" textLength="41.3" lengthAdjust="spacingAndGlyphs">487,87</text>
<text transform="translate(2268.7,1172.0) rotate(-90)" font-size="10.3" fill="#1c1c1c" textLength="41.3" lengthAdjust="spacingAndGlyphs">475,66</text>
<text transform="translate(2297.5,1172.0) rotate(-90)" font-size="10.3" fill="#1c1c1c" textLength="41.3" lengthAdjust="spacingAndGlyphs">498,85</text>
<text transform="translate(2308.1,1172.0) rotate(-90)" font-size="10.3" fill="#1c1c1c" textLength="41.3" lengthAdjust="spacingAndGlyphs">475,62</text>
<text transform="translate(2316.8,1172.0) rotate(-90)" font-size="10.3" fill="#1c1c1c" textLength="41.3" lengthAdjust="spacingAndGlyphs">504,23</text>
<text transform="translate(2327.4,1172.0) rotate(-90)" font-size="10.3" fill="#1c1c1c" textLength="41.3" lengthAdjust="spacingAndGlyphs">475,59</text>
<text transform="translate(2369.3,1172.0) rotate(-90)" font-size="10.3" fill="#1c1c1c" textLength="41.3" lengthAdjust="spacingAndGlyphs">518,90</text>
<text transform="translate(2379.9,1172.0) rotate(-90)" font-size="10.3" fill="#1c1c1c" textLength="41.3" lengthAdjust="spacingAndGlyphs">475,54</text>
<text transform="translate(2398.0,1172.0) rotate(-90)" font-size="10.3" fill="#1c1c1c" textLength="41.3" lengthAdjust="spacingAndGlyphs">526,90</text>
<text transform="translate(2408.6,1172.0) rotate(-90)" font-size="10.3" fill="#1c1c1c" textLength="41.3" lengthAdjust="spacingAndGlyphs">475,54</text>
<text transform="translate(2441.2,1172.0) rotate(-90)" font-size="10.3" fill="#1c1c1c" textLength="41.3" lengthAdjust="spacingAndGlyphs">538,96</text>
<text transform="translate(2451.8,1172.0) rotate(-90)" font-size="10.3" fill="#1c1c1c" textLength="41.3" lengthAdjust="spacingAndGlyphs">475,54</text>
<text transform="translate(2509.0,1172.0) rotate(-90)" font-size="10.3" fill="#1c1c1c" textLength="41.3" lengthAdjust="spacingAndGlyphs">557,88</text>
<text transform="translate(2519.6,1172.0) rotate(-90)" font-size="10.3" fill="#1c1c1c" textLength="41.3" lengthAdjust="spacingAndGlyphs">475,56</text>
<text transform="translate(2528.0,1172.0) rotate(-90)" font-size="10.3" fill="#1c1c1c" textLength="41.3" lengthAdjust="spacingAndGlyphs">563,16</text>
<text transform="translate(2538.6,1172.0) rotate(-90)" font-size="10.3" fill="#1c1c1c" textLength="41.3" lengthAdjust="spacingAndGlyphs">475,69</text>
<path d="M1055.9 1108.2V1176.0M1091.5 1108.2V1176.0M1108.9 1108.2V1128.2M1108.9 1173.5V1176.0M1134.5 1108.2V1176.0M1158.6 1108.2V1176.0M1185.4 1108.2V1176.0M1207.4 1108.2V1128.2M1207.4 1173.5V1176.0M1228.0 1108.2V1128.2M1228.0 1173.5V1176.0M1246.6 1108.2V1128.2M1246.6 1173.5V1176.0M1601.2 1108.2V1176.0M1629.7 1108.2V1176.0M1701.4 1108.2V1176.0M1773.1 1108.2V1176.0M1791.8 1108.2V1128.2M1791.8 1173.5V1176.0M1844.8 1108.2V1176.0M1867.1 1108.2V1128.2M1867.1 1173.5V1176.0M1916.5 1108.2V1176.0M1981.8 1108.2V1176.0M2170.3 1108.2V1176.0M2195.8 1108.2V1176.0M2214.5 1108.2V1128.2M2214.5 1173.5V1176.0M2247.7 1108.2V1176.0M2287.1 1108.2V1176.0M2306.4 1108.2V1128.2M2306.4 1173.5V1176.0M2358.9 1108.2V1176.0M2387.6 1108.2V1176.0M2430.8 1108.2V1176.0M2498.6 1108.2V1176.0M2517.6 1108.2V1128.2M2517.6 1173.5V1176.0" stroke="#000" stroke-width="1.35" fill="none"/>
<path d="M499.2 1176.0L499.2 1183.0" stroke="#1c1c1c" stroke-width="1.3"/>
<path d="M499.2 1225.4L499.2 1230.4" stroke="#1c1c1c" stroke-width="1.3"/>
<text transform="translate(503.3,1226.2) rotate(-90)" font-size="10.3" fill="#1c1c1c" textLength="39.2" lengthAdjust="spacingAndGlyphs">0,00</text>
<path d="M789.4 1176.0L789.4 1183.0" stroke="#1c1c1c" stroke-width="1.3"/>
<path d="M789.4 1225.4L789.4 1230.4" stroke="#1c1c1c" stroke-width="1.3"/>
<text transform="translate(793.5,1226.2) rotate(-90)" font-size="10.3" fill="#1c1c1c" textLength="39.2" lengthAdjust="spacingAndGlyphs">80,97</text>
<path d="M1111.9 1176.0L1111.9 1183.0" stroke="#1c1c1c" stroke-width="1.3"/>
<path d="M1111.9 1225.4L1111.9 1230.4" stroke="#1c1c1c" stroke-width="1.3"/>
<text transform="translate(1116.0,1226.2) rotate(-90)" font-size="10.3" fill="#1c1c1c" textLength="39.2" lengthAdjust="spacingAndGlyphs">170,96</text>
<path d="M1119.8 1176.0L1119.8 1183.0" stroke="#9a4f14" stroke-width="1.3"/>
<path d="M1119.8 1225.4L1119.8 1230.4" stroke="#9a4f14" stroke-width="1.3"/>
<text transform="translate(1123.9,1226.2) rotate(-90)" font-size="10.3" fill="#9a4f14" textLength="39.2" lengthAdjust="spacingAndGlyphs">173,16</text>
<path d="M1201.8 1176.0L1201.8 1183.0" stroke="#1f7fc4" stroke-width="1.3"/>
<path d="M1201.8 1225.4L1201.8 1230.4" stroke="#1f7fc4" stroke-width="1.3"/>
<text transform="translate(1205.9,1226.2) rotate(-90)" font-size="10.3" fill="#1f7fc4" textLength="39.2" lengthAdjust="spacingAndGlyphs">196,04</text>
<path d="M1220.2 1176.0L1220.2 1183.0" stroke="#22dd22" stroke-width="1.3"/>
<path d="M1220.2 1225.4L1220.2 1230.4" stroke="#22dd22" stroke-width="1.3"/>
<text transform="translate(1224.3,1226.2) rotate(-90)" font-size="10.3" fill="#22dd22" textLength="39.2" lengthAdjust="spacingAndGlyphs">201,18</text>
<path d="M1451.0 1176.0L1451.0 1183.0" stroke="#1c1c1c" stroke-width="1.3"/>
<path d="M1451.0 1225.4L1451.0 1230.4" stroke="#1c1c1c" stroke-width="1.3"/>
<text transform="translate(1455.1,1226.2) rotate(-90)" font-size="10.3" fill="#1c1c1c" textLength="39.2" lengthAdjust="spacingAndGlyphs">265,57</text>
<path d="M1631.2 1176.0L1631.2 1183.0" stroke="#1c1c1c" stroke-width="1.3"/>
<path d="M1631.2 1225.4L1631.2 1230.4" stroke="#1c1c1c" stroke-width="1.3"/>
<text transform="translate(1635.3,1226.2) rotate(-90)" font-size="10.3" fill="#1c1c1c" textLength="39.2" lengthAdjust="spacingAndGlyphs">315,84</text>
<path d="M1879.0 1176.0L1879.0 1183.0" stroke="#1c1c1c" stroke-width="1.3"/>
<path d="M1879.0 1225.4L1879.0 1230.4" stroke="#1c1c1c" stroke-width="1.3"/>
<text transform="translate(1883.1,1226.2) rotate(-90)" font-size="10.3" fill="#1c1c1c" textLength="39.2" lengthAdjust="spacingAndGlyphs">384,98</text>
<path d="M2123.2 1176.0L2123.2 1183.0" stroke="#1c1c1c" stroke-width="1.3"/>
<path d="M2123.2 1225.4L2123.2 1230.4" stroke="#1c1c1c" stroke-width="1.3"/>
<text transform="translate(2127.3,1226.2) rotate(-90)" font-size="10.3" fill="#1c1c1c" textLength="39.2" lengthAdjust="spacingAndGlyphs">453,12</text>
<path d="M2517.6 1176.0L2517.6 1183.0" stroke="#1c1c1c" stroke-width="1.3"/>
<path d="M2517.6 1225.4L2517.6 1230.4" stroke="#1c1c1c" stroke-width="1.3"/>
<text transform="translate(2521.7,1226.2) rotate(-90)" font-size="10.3" fill="#1c1c1c" textLength="39.2" lengthAdjust="spacingAndGlyphs">563,16</text>
<path d="M499.2 1230.4L499.2 1236.9" stroke="#000" stroke-width="1.2"/>
<text transform="translate(499.2,1241.8)" font-size="6.2" fill="#222" textLength="23.4" lengthAdjust="spacingAndGlyphs" text-anchor="middle">0+000</text>
<path d="M588.8 1230.4L588.8 1236.9" stroke="#000" stroke-width="1.2"/>
<text transform="translate(588.8,1241.8)" font-size="6.2" fill="#222" textLength="23.4" lengthAdjust="spacingAndGlyphs" text-anchor="middle">0+025</text>
<path d="M678.4 1230.4L678.4 1236.9" stroke="#000" stroke-width="1.2"/>
<text transform="translate(678.4,1241.8)" font-size="6.2" fill="#222" textLength="23.4" lengthAdjust="spacingAndGlyphs" text-anchor="middle">0+050</text>
<path d="M768.0 1230.4L768.0 1236.9" stroke="#000" stroke-width="1.2"/>
<text transform="translate(768.0,1241.8)" font-size="6.2" fill="#222" textLength="23.4" lengthAdjust="spacingAndGlyphs" text-anchor="middle">0+075</text>
<path d="M857.6 1230.4L857.6 1236.9" stroke="#000" stroke-width="1.2"/>
<text transform="translate(857.6,1241.8)" font-size="6.2" fill="#222" textLength="23.4" lengthAdjust="spacingAndGlyphs" text-anchor="middle">0+100</text>
<path d="M947.2 1230.4L947.2 1236.9" stroke="#000" stroke-width="1.2"/>
<text transform="translate(947.2,1241.8)" font-size="6.2" fill="#222" textLength="23.4" lengthAdjust="spacingAndGlyphs" text-anchor="middle">0+125</text>
<path d="M1036.8 1230.4L1036.8 1236.9" stroke="#000" stroke-width="1.2"/>
<text transform="translate(1036.8,1241.8)" font-size="6.2" fill="#222" textLength="23.4" lengthAdjust="spacingAndGlyphs" text-anchor="middle">0+150</text>
<path d="M1126.4 1230.4L1126.4 1236.9" stroke="#000" stroke-width="1.2"/>
<text transform="translate(1126.4,1241.8)" font-size="6.2" fill="#222" textLength="23.4" lengthAdjust="spacingAndGlyphs" text-anchor="middle">0+175</text>
<path d="M1216.0 1230.4L1216.0 1236.9" stroke="#000" stroke-width="1.2"/>
<text transform="translate(1216.0,1241.8)" font-size="6.2" fill="#222" textLength="23.4" lengthAdjust="spacingAndGlyphs" text-anchor="middle">0+200</text>
<path d="M1305.6 1230.4L1305.6 1236.9" stroke="#000" stroke-width="1.2"/>
<text transform="translate(1305.6,1241.8)" font-size="6.2" fill="#222" textLength="23.4" lengthAdjust="spacingAndGlyphs" text-anchor="middle">0+225</text>
<path d="M1395.2 1230.4L1395.2 1236.9" stroke="#000" stroke-width="1.2"/>
<text transform="translate(1395.2,1241.8)" font-size="6.2" fill="#222" textLength="23.4" lengthAdjust="spacingAndGlyphs" text-anchor="middle">0+250</text>
<path d="M1484.8 1230.4L1484.8 1236.9" stroke="#000" stroke-width="1.2"/>
<text transform="translate(1484.8,1241.8)" font-size="6.2" fill="#222" textLength="23.4" lengthAdjust="spacingAndGlyphs" text-anchor="middle">0+275</text>
<path d="M1574.4 1230.4L1574.4 1236.9" stroke="#000" stroke-width="1.2"/>
<text transform="translate(1574.4,1241.8)" font-size="6.2" fill="#222" textLength="23.4" lengthAdjust="spacingAndGlyphs" text-anchor="middle">0+300</text>
<path d="M1664.0 1230.4L1664.0 1236.9" stroke="#000" stroke-width="1.2"/>
<text transform="translate(1664.0,1241.8)" font-size="6.2" fill="#222" textLength="23.4" lengthAdjust="spacingAndGlyphs" text-anchor="middle">0+325</text>
<path d="M1753.6 1230.4L1753.6 1236.9" stroke="#000" stroke-width="1.2"/>
<text transform="translate(1753.6,1241.8)" font-size="6.2" fill="#222" textLength="23.4" lengthAdjust="spacingAndGlyphs" text-anchor="middle">0+350</text>
<path d="M1843.2 1230.4L1843.2 1236.9" stroke="#000" stroke-width="1.2"/>
<text transform="translate(1843.2,1241.8)" font-size="6.2" fill="#222" textLength="23.4" lengthAdjust="spacingAndGlyphs" text-anchor="middle">0+375</text>
<path d="M1932.8 1230.4L1932.8 1236.9" stroke="#000" stroke-width="1.2"/>
<text transform="translate(1932.8,1241.8)" font-size="6.2" fill="#222" textLength="23.4" lengthAdjust="spacingAndGlyphs" text-anchor="middle">0+400</text>
<path d="M2022.4 1230.4L2022.4 1236.9" stroke="#000" stroke-width="1.2"/>
<text transform="translate(2022.4,1241.8)" font-size="6.2" fill="#222" textLength="23.4" lengthAdjust="spacingAndGlyphs" text-anchor="middle">0+425</text>
<path d="M2112.0 1230.4L2112.0 1236.9" stroke="#000" stroke-width="1.2"/>
<text transform="translate(2112.0,1241.8)" font-size="6.2" fill="#222" textLength="23.4" lengthAdjust="spacingAndGlyphs" text-anchor="middle">0+450</text>
<path d="M2201.6 1230.4L2201.6 1236.9" stroke="#000" stroke-width="1.2"/>
<text transform="translate(2201.6,1241.8)" font-size="6.2" fill="#222" textLength="23.4" lengthAdjust="spacingAndGlyphs" text-anchor="middle">0+475</text>
<path d="M2291.2 1230.4L2291.2 1236.9" stroke="#000" stroke-width="1.2"/>
<text transform="translate(2291.2,1241.8)" font-size="6.2" fill="#222" textLength="23.4" lengthAdjust="spacingAndGlyphs" text-anchor="middle">0+500</text>
<path d="M2380.8 1230.4L2380.8 1236.9" stroke="#000" stroke-width="1.2"/>
<text transform="translate(2380.8,1241.8)" font-size="6.2" fill="#222" textLength="23.4" lengthAdjust="spacingAndGlyphs" text-anchor="middle">0+525</text>
<path d="M2470.4 1230.4L2470.4 1236.9" stroke="#000" stroke-width="1.2"/>
<text transform="translate(2470.4,1241.8)" font-size="6.2" fill="#222" textLength="23.4" lengthAdjust="spacingAndGlyphs" text-anchor="middle">0+550</text>
</g>
<g id="dialog">
<rect x="0.0" y="178.0" width="1045.5" height="1068.0" fill="#000"/>
<rect x="10.0" y="188.0" width="1024.8" height="1046.5" fill="#f0f0f0"/>
<defs><linearGradient id="tb" x1="0" y1="0" x2="0" y2="1"><stop offset="0" stop-color="#eff3f9"/><stop offset="1" stop-color="#edf1f8"/></linearGradient></defs>
<rect x="10.0" y="188.0" width="1024.8" height="58.6" fill="url(#tb)"/>
<rect x="10.0" y="188.0" width="1.5" height="1046.5" fill="#e4e4e4"/>
<rect x="1031.8" y="246.0" width="1.4" height="988.5" fill="#a8a8a8"/>
<path d="M25.9 204h24.8l5.4 5.4v20.6h-30.2z" fill="#fafafa" stroke="#000" stroke-width="1.7"/>
<rect x="28.9" y="217.3" width="24.7" height="9.5" fill="#8e8e8e"/>
<rect x="32.5" y="211.2" width="2.2" height="6.2" fill="#8e8e8e"/>
<rect x="39.0" y="211.2" width="2.0" height="6.2" fill="#8e8e8e"/>
<rect x="45.2" y="211.2" width="2.1" height="6.2" fill="#8e8e8e"/>
<rect x="51.5" y="211.2" width="2.1" height="6.2" fill="#8e8e8e"/>
<rect x="30.3" y="219.1" width="2.2" height="2.0" fill="#f0f0f0"/>
<rect x="30.3" y="223.3" width="2.2" height="2.0" fill="#f0f0f0"/>
<rect x="34.9" y="219.1" width="4.0" height="2.0" fill="#f0f0f0"/>
<rect x="34.9" y="223.3" width="4.0" height="2.0" fill="#f0f0f0"/>
<rect x="41.1" y="219.1" width="3.9" height="2.0" fill="#f0f0f0"/>
<rect x="41.1" y="223.3" width="3.9" height="2.0" fill="#f0f0f0"/>
<rect x="47.3" y="219.1" width="4.1" height="2.0" fill="#f0f0f0"/>
<rect x="47.3" y="223.3" width="4.1" height="2.0" fill="#f0f0f0"/>
<path d="M33.2 211.2l3-3.9l3.2 2.1l2.6-1.8l3.7 6l2.6-2.6l4.6 0.5" stroke="#24ea14" stroke-width="3" fill="none" stroke-linejoin="round" stroke-linecap="round"/>
<path d="M50.4 204.2v5.6h5.6" stroke="#000" stroke-width="1.7" fill="none"/>
<rect x="51.4" y="205.6" width="2.8" height="3.2" fill="#222"/>
<text transform="translate(66.4,226.6)" font-size="24" fill="#000" textLength="316.6" lengthAdjust="spacingAndGlyphs">Kanal - LS-Definition editieren</text>
<path d="M792 216.8h20" stroke="#000" stroke-width="2"/>
<rect x="884" y="208.8" width="17.6" height="17" rx="2.6" fill="none" stroke="#000" stroke-width="2"/>
<path d="M976.4 207.6l19.4 19.4M995.8 207.6l-19.4 19.4" stroke="#000" stroke-width="2"/>
<rect x="15.0" y="249.5" width="1.2" height="39.2" fill="#9c9c9c"/>
<rect x="33.4" y="253.6" width="21.4" height="31.2" fill="#f6ec36" stroke="#000" stroke-width="1.2"/>
<path d="M34 254.2h8.9v21.2l-8 8.8h-0.9z" fill="#6e0b0b"/>
<rect x="37.4" y="254.2" width="5.0" height="1.8" fill="#1fb0f0"/>
<rect x="42.6" y="262.2" width="1.2" height="2.4" fill="#000"/>
<text transform="translate(164.0,281.6)" font-size="21.33" fill="#000" textLength="171.5" lengthAdjust="spacingAndGlyphs" font-weight="bold">Definitionsname</text>
<rect x="352.0" y="253.8" width="672.5" height="40.2" fill="#fff"/>
<rect x="352.0" y="294.0" width="672.5" height="1.2" fill="#9a9a9a"/>
<text transform="translate(354.8,276.8)" font-size="21.33" fill="#000" textLength="265.0" lengthAdjust="spacingAndGlyphs">RW Strasse (RW01-RW08)</text>
<rect x="12.0" y="300.4" width="1020.0" height="1.2" fill="#a6a6a6"/>
<rect x="14.0" y="301.6" width="1017.5" height="102.4" fill="#fff"/>
<rect x="20.0" y="310.0" width="24" height="26" rx="3" fill="#f4f4f4" stroke="#2e2e2e" stroke-width="2"/>
<path d="M31.4 310.0v26" stroke="#2e2e2e" stroke-width="2"/>
<path d="M19.8 324.0h24.6" stroke="#d39656" stroke-width="5" stroke-dasharray="3.4 1.2"/>
<path d="M19.8 324.0h24.6" stroke="#a86a30" stroke-width="1.4"/>
<rect x="45.8" y="305.5" width="2.2" height="36.5" fill="#000"/>
<rect x="50.0" y="305.6" width="939.0" height="34.4" fill="#7d7d7d"/>
<rect x="50.0" y="305.6" width="937.0" height="32.2" fill="#ffffff"/>
<rect x="51.5" y="307.1" width="935.5" height="30.7" fill="#f0f0f0"/>
<text transform="translate(58.5,329.5)" font-size="21.33" fill="#000" textLength="69.3" lengthAdjust="spacingAndGlyphs" font-weight="bold">Strang</text>
<rect x="15.0" y="343.0" width="975.2" height="35.6" fill="#0078d7"/>
<rect x="46.8" y="343.0" width="1.8" height="35.6" fill="#d5e8f8"/>
<text transform="translate(52.0,368.2)" font-size="21.33" fill="#fff" textLength="495.7" lengthAdjust="spacingAndGlyphs">RW Strasse Strang (RW01-RW08) (RW01 - RW08)</text>
<rect x="896.0" y="347.0" width="31.6" height="31.8" fill="#696969"/>
<rect x="896.0" y="347.0" width="30.1" height="30.3" fill="#ffffff"/>
<rect x="897.4" y="348.4" width="28.7" height="28.9" fill="#b0b0b0"/>
<rect x="897.4" y="348.4" width="27.0" height="27.2" fill="#f0f0f0"/>
<path d="M905.8 359.3h14.4l-7.2 7.6z" fill="#000"/>
<rect x="928.0" y="347.0" width="31.8" height="31.8" fill="#858585"/>
<rect x="928.0" y="347.0" width="30.2" height="30.2" fill="#ffffff"/>
<rect x="929.3" y="348.3" width="28.9" height="28.9" fill="#f0f0f0"/>
<circle cx="941.5" cy="360.0" r="8" fill="#fff" stroke="#000" stroke-width="2.2"/>
<path d="M941.5 347.0v4.6M941.5 369.4v5M928.0 360.0h4.6M951.1 360.0h4.4" stroke="#000" stroke-width="2.2" fill="none"/>
<path d="M948.3 367.4L958.6 377.6" stroke="#000" stroke-width="4.4"/>
<rect x="959.8" y="347.0" width="32.0" height="31.8" fill="#858585"/>
<rect x="959.8" y="347.0" width="30.4" height="30.2" fill="#ffffff"/>
<rect x="961.1" y="348.3" width="29.1" height="28.9" fill="#f0f0f0"/>
<rect x="966.9" y="353.8" width="15.8" height="16" fill="none" stroke="#ff0000" stroke-width="2.2"/>
<path d="M974.9 351.4v21M964.0 362.0h21.6" stroke="#000" stroke-width="2.2" fill="none"/>
<rect x="12.0" y="403.4" width="1020.0" height="1.4" fill="#a0a0a0"/>
<rect x="14.0" y="404.8" width="1017.5" height="138.4" fill="#fff"/>
<rect x="20.8" y="413.4" width="24" height="26" rx="3" fill="#f4f4f4" stroke="#2e2e2e" stroke-width="2"/>
<path d="M32.2 413.4v26" stroke="#2e2e2e" stroke-width="2"/>
<path d="M20.6 427.4h24.6" stroke="#d39656" stroke-width="5" stroke-dasharray="3.4 1.2"/>
<path d="M20.6 427.4h24.6" stroke="#a86a30" stroke-width="1.4"/>
<rect x="46.0" y="408.0" width="2.2" height="37.4" fill="#000"/>
<rect x="50.2" y="409.0" width="465.8" height="35.0" fill="#7d7d7d"/>
<rect x="50.2" y="409.0" width="463.8" height="32.8" fill="#ffffff"/>
<rect x="51.7" y="410.5" width="462.3" height="31.3" fill="#f0f0f0"/>
<rect x="516.6" y="408.0" width="2.4" height="37.4" fill="#000"/>
<rect x="521.0" y="409.0" width="466.0" height="35.0" fill="#7d7d7d"/>
<rect x="521.0" y="409.0" width="464.0" height="32.8" fill="#ffffff"/>
<rect x="522.5" y="410.5" width="462.5" height="31.3" fill="#f0f0f0"/>
<text transform="translate(59.5,432.8)" font-size="21.33" fill="#000" textLength="130.4" lengthAdjust="spacingAndGlyphs" font-weight="bold">par. Stränge</text>
<text transform="translate(529.4,432.8)" font-size="21.33" fill="#000" textLength="176.1" lengthAdjust="spacingAndGlyphs" font-weight="bold">Legendeneintrag</text>
<rect x="16.0" y="446.6" width="972.0" height="35.3" fill="#0078d7"/>
<rect x="47.0" y="446.6" width="1.8" height="35.3" fill="#d5e8f8"/>
<rect x="517.4" y="446.6" width="1.6" height="35.3" fill="#d5e8f8"/>
<text transform="translate(52.0,470.7)" font-size="21.33" fill="#fff" textLength="47.7" lengthAdjust="spacingAndGlyphs">ohne</text>
<text transform="translate(522.8,470.7)" font-size="21.33" fill="#fff" textLength="47.7" lengthAdjust="spacingAndGlyphs">ohne</text>
<rect x="424.0" y="450.5" width="31.4" height="31.5" fill="#696969"/>
<rect x="424.0" y="450.5" width="29.9" height="30.0" fill="#ffffff"/>
<rect x="425.4" y="451.9" width="28.5" height="28.6" fill="#b0b0b0"/>
<rect x="425.4" y="451.9" width="26.8" height="26.9" fill="#f0f0f0"/>
<path d="M433.7 462.6h14.4l-7.2 7.6z" fill="#000"/>
<rect x="456.6" y="450.5" width="31.2" height="31.5" fill="#858585"/>
<rect x="456.6" y="450.5" width="29.6" height="29.9" fill="#ffffff"/>
<rect x="457.9" y="451.8" width="28.3" height="28.6" fill="#f0f0f0"/>
<circle cx="470.1" cy="463.5" r="8" fill="#fff" stroke="#000" stroke-width="2.2"/>
<path d="M470.1 450.5v4.6M470.1 472.9v5M456.6 463.5h4.6M479.7 463.5h4.4" stroke="#000" stroke-width="2.2" fill="none"/>
<path d="M476.9 470.9L486.6 480.8" stroke="#000" stroke-width="4.4"/>
<rect x="489.0" y="450.5" width="29.4" height="31.5" fill="#858585"/>
<rect x="489.0" y="450.5" width="27.8" height="29.9" fill="#ffffff"/>
<rect x="490.3" y="451.8" width="26.5" height="28.6" fill="#f0f0f0"/>
<rect x="496.1" y="457.3" width="15.8" height="16" fill="none" stroke="#ff0000" stroke-width="2.2"/>
<path d="M504.1 454.9v21M493.2 465.5h21.6" stroke="#000" stroke-width="2.2" fill="none"/>
<rect x="958.0" y="450.5" width="32.0" height="31.5" fill="#696969"/>
<rect x="958.0" y="450.5" width="30.5" height="30.0" fill="#ffffff"/>
<rect x="959.4" y="451.9" width="29.1" height="28.6" fill="#b0b0b0"/>
<rect x="959.4" y="451.9" width="27.4" height="26.9" fill="#f0f0f0"/>
<path d="M968.0 462.6h14.4l-7.2 7.6z" fill="#000"/>
<rect x="12.0" y="543.0" width="1020.0" height="1.4" fill="#a0a0a0"/>
<rect x="924" y="551" width="40" height="40" rx="4" fill="#f7f7f7" stroke="#ececec" stroke-width="1"/>
<rect x="934.8" y="567.4" width="18.6" height="6.6" fill="#ffffff" stroke="#7e7e7e" stroke-width="1.8"/>
<rect x="971.8" y="551" width="40.4" height="40" rx="4" fill="#fdfdfd" stroke="#d6d6d6" stroke-width="1"/>
<path d="M988.6 561.4h6.8v6h6v6.8h-6v6h-6.8v-6h-6v-6.8h6z" fill="#12a5f4" stroke="#0a18f0" stroke-width="2"/>
<rect x="12.0" y="601.6" width="1020.0" height="2.4" fill="#9c9c9c"/>
<rect x="14.0" y="621.6" width="10.0" height="1.2" fill="#dcdcdc"/>
<rect x="386.0" y="621.6" width="645.0" height="1.2" fill="#dcdcdc"/>
<text transform="translate(27.7,629.9)" font-size="21.33" fill="#000" textLength="354.0" lengthAdjust="spacingAndGlyphs">LS-Definition Fremdgewerk (Leitung)</text>
<rect x="29.6" y="641.6" width="785" height="32.6" rx="1.5" fill="#fdfdfc" stroke="#d2d2d6" stroke-width="1"/>
<rect x="30.0" y="673.8" width="784.6" height="1.0" fill="#c2c2c2"/>
<text transform="translate(34.0,665.8)" font-size="21.33" fill="#000" textLength="61.1" lengthAdjust="spacingAndGlyphs">&lt;leer&gt;</text>
<path d="M792.2 655.4l6.3 6.3l6.3-6.3" stroke="#333" stroke-width="1.5" fill="none"/>
<rect x="12.0" y="698.6" width="1020.0" height="1.2" fill="#dadada"/>
<rect x="12.0" y="699.8" width="1020.0" height="1.2" fill="#fbfbfb"/>
<text transform="translate(38.0,742.0)" font-size="21.33" fill="#000" textLength="146.0" lengthAdjust="spacingAndGlyphs" font-weight="bold">Stationsoffset</text>
<rect x="210.0" y="720.0" width="444.0" height="31.2" fill="#fff"/>
<rect x="210.0" y="751.0" width="444.0" height="1.2" fill="#7a7a7a"/>
<text transform="translate(607.0,743.0)" font-size="21.33" fill="#000" textLength="40.8" lengthAdjust="spacingAndGlyphs" text-anchor="end">0,00</text>
<rect x="612.4" y="720.6" width="42.0" height="30.6" fill="#858585"/>
<rect x="612.4" y="720.6" width="40.4" height="29.0" fill="#ffffff"/>
<rect x="613.7" y="721.9" width="39.1" height="27.7" fill="#f0f0f0"/>
<rect x="621.6" y="725.6" width="25.4" height="22.0" fill="#000060"/>
<rect x="619.4" y="724.2" width="25.2" height="21.2" fill="#0a5e84"/>
<path d="M620.4 745.4v-20.2h23.4" stroke="#12b4ff" stroke-width="2" fill="none"/>
<path d="M620.4 745.4v-20.2h23.4" stroke="#fff" stroke-width="2" fill="none" stroke-dasharray="1.6 2"/>
<rect x="625.0" y="730.0" width="14.2" height="4.0" fill="#c8c8c8"/>
<rect x="624.6" y="735.8" width="17.8" height="2.8" fill="#000"/>
<path d="M625.6 737.2h16" stroke="#fff" stroke-width="1.6" stroke-dasharray="1.8 1.9"/>
<rect x="624.6" y="739.8" width="17.8" height="2.8" fill="#000"/>
<path d="M625.6 741.2h16" stroke="#fff" stroke-width="1.6" stroke-dasharray="1.8 1.9"/>
<text transform="translate(766.2,758.2)" font-size="21.33" fill="#000" textLength="218.0" lengthAdjust="spacingAndGlyphs">im Lageplan darstellen</text>
<rect x="987.3" y="738.0" width="24.0" height="23.8" rx="4.5" fill="#f6f6f6" stroke="#5f5f5f" stroke-width="1.4"/>
<rect x="12.0" y="773.6" width="1020.0" height="1.2" fill="#dadada"/>
<rect x="12.0" y="774.8" width="1020.0" height="1.2" fill="#fbfbfb"/>
<text transform="translate(44.0,821.5)" font-size="21.33" fill="#000" textLength="130.4" lengthAdjust="spacingAndGlyphs" font-weight="bold">Bezugshöhe</text>
<rect x="193.9" y="804.0" width="24.0" height="23.7" rx="4.5" fill="#f6f6f6" stroke="#5f5f5f" stroke-width="1.4"/>
<text transform="translate(225.7,823.5)" font-size="21.33" fill="#000" textLength="76.2" lengthAdjust="spacingAndGlyphs">manuell</text>
<rect x="344.2" y="799.6" width="401.2" height="32.3" fill="#fff"/>
<text transform="translate(544.8,823.0)" font-size="21.33" fill="#a2a2a2" textLength="117.4" lengthAdjust="spacingAndGlyphs" text-anchor="middle">automatisch</text>
<rect x="746.4" y="800.6" width="41.4" height="30.2" fill="#858585"/>
<rect x="746.4" y="800.6" width="39.8" height="28.6" fill="#ffffff"/>
<rect x="747.7" y="801.9" width="38.5" height="27.3" fill="#f0f0f0"/>
<rect x="754.4" y="805.2" width="25.6" height="21.6" fill="none" stroke="#7c7c7c" stroke-width="1.8"/>
<path d="M758.4 813v-4h18" stroke="#7c7c7c" stroke-width="1.6" fill="none"/>
<path d="M759.4 817h18M759.4 821h18" stroke="#7c7c7c" stroke-width="1.6" stroke-dasharray="1.8 2.2"/>
<rect x="38.0" y="843.9" width="23.9" height="23.8" rx="4.5" fill="#f6f6f6" stroke="#5f5f5f" stroke-width="1.4"/>
<text transform="translate(69.6,864.2)" font-size="21.33" fill="#000" textLength="110.9" lengthAdjust="spacingAndGlyphs">Abtreppung</text>
<rect x="12.0" y="884.6" width="1020.0" height="1.2" fill="#dadada"/>
<rect x="12.0" y="885.8" width="1020.0" height="1.2" fill="#fbfbfb"/>
<rect x="14.0" y="900.0" width="8.0" height="1.2" fill="#dcdcdc"/>
<rect x="497.0" y="900.0" width="534.0" height="1.2" fill="#dcdcdc"/>
<text transform="translate(28.7,907.6)" font-size="21.33" fill="#000" textLength="463.5" lengthAdjust="spacingAndGlyphs" font-weight="bold">Geländemodell - zu verwendende Horizonte</text>
<rect x="16.0" y="915.6" width="1013.6" height="163.8" fill="#fff"/>
<rect x="22.2" y="922.4" width="24" height="26" rx="3" fill="#f4f4f4" stroke="#2e2e2e" stroke-width="2"/>
<path d="M33.6 922.4v26" stroke="#2e2e2e" stroke-width="2"/>
<path d="M22.0 936.4h24.6" stroke="#d39656" stroke-width="5" stroke-dasharray="3.4 1.2"/>
<path d="M22.0 936.4h24.6" stroke="#a86a30" stroke-width="1.4"/>
<rect x="48.0" y="917.0" width="2.2" height="36.8" fill="#000"/>
<rect x="86.2" y="917.0" width="2.2" height="36.8" fill="#000"/>
<rect x="375.0" y="917.0" width="2.2" height="36.8" fill="#000"/>
<rect x="745.4" y="917.0" width="2.2" height="36.8" fill="#000"/>
<rect x="51.6" y="918.0" width="33.6" height="34.0" fill="#7d7d7d"/>
<rect x="51.6" y="918.0" width="31.6" height="31.8" fill="#ffffff"/>
<rect x="53.1" y="919.5" width="30.1" height="30.3" fill="#f0f0f0"/>
<rect x="89.6" y="918.0" width="283.8" height="34.0" fill="#7d7d7d"/>
<rect x="89.6" y="918.0" width="281.8" height="31.8" fill="#ffffff"/>
<rect x="91.1" y="919.5" width="280.3" height="30.3" fill="#f0f0f0"/>
<rect x="378.4" y="918.0" width="365.6" height="34.0" fill="#7d7d7d"/>
<rect x="378.4" y="918.0" width="363.6" height="31.8" fill="#ffffff"/>
<rect x="379.9" y="919.5" width="362.1" height="30.3" fill="#f0f0f0"/>
<rect x="749.0" y="918.0" width="249.8" height="34.0" fill="#7d7d7d"/>
<rect x="749.0" y="918.0" width="247.8" height="31.8" fill="#ffffff"/>
<rect x="750.5" y="919.5" width="246.3" height="30.3" fill="#f0f0f0"/>
<text transform="translate(98.9,941.5)" font-size="21.33" fill="#000" textLength="62.0" lengthAdjust="spacingAndGlyphs" font-weight="bold">Name</text>
<text transform="translate(387.6,941.5)" font-size="21.33" fill="#000" textLength="172.0" lengthAdjust="spacingAndGlyphs" font-weight="bold">Linienparameter</text>
<text transform="translate(759.0,941.5)" font-size="21.33" fill="#000" textLength="131.5" lengthAdjust="spacingAndGlyphs" font-weight="bold">Beschriftung</text>
<rect x="17.8" y="955.4" width="30.2" height="35.4" fill="#7d7d7d"/>
<rect x="17.8" y="955.4" width="28.4" height="33.4" fill="#fff"/>
<rect x="19.0" y="956.6" width="27.2" height="32.2" fill="#f0f0f0"/>
<rect x="17.8" y="992.6" width="30.2" height="36.0" fill="#7d7d7d"/>
<rect x="17.8" y="992.6" width="28.4" height="34.0" fill="#fff"/>
<rect x="19.0" y="993.8" width="27.2" height="32.8" fill="#f0f0f0"/>
<rect x="51.0" y="954.9" width="949.0" height="36.1" fill="#0078d7"/>
<rect x="87.2" y="954.9" width="1.6" height="36.1" fill="#e8f2fb"/>
<rect x="87.2" y="991.0" width="1.6" height="38.0" fill="#ededed"/>
<rect x="375.8" y="954.9" width="1.6" height="36.1" fill="#e8f2fb"/>
<rect x="375.8" y="991.0" width="1.6" height="38.0" fill="#ededed"/>
<rect x="746.6" y="954.9" width="1.6" height="36.1" fill="#e8f2fb"/>
<rect x="746.6" y="991.0" width="1.6" height="38.0" fill="#ededed"/>
<rect x="50.2" y="991.0" width="1.2" height="38.0" fill="#ededed"/>
<rect x="16.0" y="1028.8" width="1013.6" height="1.2" fill="#ececec"/>
<rect x="51.0" y="991.0" width="949.0" height="1.0" fill="#f2f2f2"/>
<clipPath id="c1"><rect x="88" y="950" width="282" height="90"/></clipPath>
<clipPath id="c2"><rect x="377" y="950" width="340.8" height="90"/></clipPath>
<g clip-path="url(#c1)"><text transform="translate(92.1,980.4)" font-size="21.33" fill="#fff" textLength="289.2" lengthAdjust="spacingAndGlyphs">[DGM]-DGM-Strassenplanung</text></g>
<g clip-path="url(#c2)"><text transform="translate(411.8,980.4)" font-size="21.33" fill="#fff" textLength="253.6" lengthAdjust="spacingAndGlyphs">Art: [System]-Continuous |</text><text transform="translate(680.0,980.4)" font-size="21.33" fill="#fff" textLength="56.8" lengthAdjust="spacingAndGlyphs">Breite</text></g>
<text transform="translate(751.6,980.4)" font-size="21.33" fill="#fff" textLength="198.5" lengthAdjust="spacingAndGlyphs">nur letzte DGM-Linie</text>
<g clip-path="url(#c1)"><text transform="translate(92.1,1018.2)" font-size="21.33" fill="#000" textLength="227.0" lengthAdjust="spacingAndGlyphs">[DGM]-DGM-Urgelände</text></g>
<g clip-path="url(#c2)"><text transform="translate(411.8,1018.2)" font-size="21.33" fill="#000" textLength="242.5" lengthAdjust="spacingAndGlyphs">Art: [System]-gestrichelt |</text><text transform="translate(668.6,1018.2)" font-size="21.33" fill="#000" textLength="56.8" lengthAdjust="spacingAndGlyphs">Breite</text></g>
<text transform="translate(751.6,1018.2)" font-size="21.33" fill="#000" textLength="198.5" lengthAdjust="spacingAndGlyphs">nur letzte DGM-Linie</text>
<rect x="55.0" y="961.0" width="24.0" height="24.0" fill="#ffffff"/>
<rect x="55.0" y="961.0" width="24.0" height="2.0" fill="#808080"/>
<rect x="55.0" y="961.0" width="2.0" height="24.0" fill="#808080"/>
<rect x="57.0" y="963.0" width="20.0" height="2.0" fill="#404040"/>
<rect x="57.0" y="963.0" width="2.0" height="20.0" fill="#404040"/>
<rect x="57.0" y="981.5" width="20.5" height="1.8" fill="#d4d0c8"/>
<rect x="75.5" y="963.0" width="1.8" height="20.0" fill="#d4d0c8"/>
<path d="M61.3 971.2l5.1 4.6l8.5-8.5v5.3l-8.5 8.4l-5.1-4.4z" fill="#000"/>
<rect x="382.0" y="961.0" width="24.0" height="24.0" fill="#ffffff"/>
<rect x="382.0" y="961.0" width="24.0" height="2.0" fill="#808080"/>
<rect x="382.0" y="961.0" width="2.0" height="24.0" fill="#808080"/>
<rect x="384.0" y="963.0" width="20.0" height="2.0" fill="#404040"/>
<rect x="384.0" y="963.0" width="2.0" height="20.0" fill="#404040"/>
<rect x="384.0" y="981.5" width="20.5" height="1.8" fill="#d4d0c8"/>
<rect x="402.5" y="963.0" width="1.8" height="20.0" fill="#d4d0c8"/>
<path d="M388.3 971.2l5.1 4.6l8.5-8.5v5.3l-8.5 8.4l-5.1-4.4z" fill="#000"/>
<rect x="55.0" y="998.8" width="24.0" height="24.0" fill="#ffffff"/>
<rect x="55.0" y="998.8" width="24.0" height="2.0" fill="#808080"/>
<rect x="55.0" y="998.8" width="2.0" height="24.0" fill="#808080"/>
<rect x="57.0" y="1000.8" width="20.0" height="2.0" fill="#404040"/>
<rect x="57.0" y="1000.8" width="2.0" height="20.0" fill="#404040"/>
<rect x="57.0" y="1019.3" width="20.5" height="1.8" fill="#d4d0c8"/>
<rect x="75.5" y="1000.8" width="1.8" height="20.0" fill="#d4d0c8"/>
<path d="M61.3 1009.0l5.1 4.6l8.5-8.5v5.3l-8.5 8.4l-5.1-4.4z" fill="#000"/>
<rect x="382.0" y="998.8" width="24.0" height="24.0" fill="#ffffff"/>
<rect x="382.0" y="998.8" width="24.0" height="2.0" fill="#808080"/>
<rect x="382.0" y="998.8" width="2.0" height="24.0" fill="#808080"/>
<rect x="384.0" y="1000.8" width="20.0" height="2.0" fill="#404040"/>
<rect x="384.0" y="1000.8" width="2.0" height="20.0" fill="#404040"/>
<rect x="384.0" y="1019.3" width="20.5" height="1.8" fill="#d4d0c8"/>
<rect x="402.5" y="1000.8" width="1.8" height="20.0" fill="#d4d0c8"/>
<path d="M388.3 1009.0l5.1 4.6l8.5-8.5v5.3l-8.5 8.4l-5.1-4.4z" fill="#000"/>
<rect x="717.8" y="957.4" width="29.2" height="33.6" fill="#8a8a8a"/>
<rect x="717.8" y="957.4" width="27.6" height="32.0" fill="#fff"/>
<rect x="719.0" y="958.6" width="26.4" height="30.8" fill="#f0f0f0"/>
<rect x="727.4" y="972.0" width="4.2" height="4.4" fill="#000"/>
<rect x="733.6" y="972.0" width="4.2" height="4.4" fill="#000"/>
<rect x="739.8" y="972.0" width="4.2" height="4.4" fill="#000"/>
<rect x="717.8" y="994.0" width="29.2" height="34.4" fill="#8a8a8a"/>
<rect x="717.8" y="994.0" width="27.6" height="32.8" fill="#fff"/>
<rect x="719.0" y="995.2" width="26.4" height="31.6" fill="#f0f0f0"/>
<rect x="727.4" y="1008.6" width="4.2" height="4.4" fill="#000"/>
<rect x="733.6" y="1008.6" width="4.2" height="4.4" fill="#000"/>
<rect x="739.8" y="1008.6" width="4.2" height="4.4" fill="#000"/>
<rect x="970.0" y="958.6" width="31.4" height="31.6" fill="#696969"/>
<rect x="970.0" y="958.6" width="29.9" height="30.1" fill="#ffffff"/>
<rect x="971.4" y="960.0" width="28.5" height="28.7" fill="#b0b0b0"/>
<rect x="971.4" y="960.0" width="26.8" height="27.0" fill="#f0f0f0"/>
<path d="M979.7 970.8h14.4l-7.2 7.6z" fill="#000"/>
<rect x="970.0" y="995.6" width="31.4" height="31.8" fill="#696969"/>
<rect x="970.0" y="995.6" width="29.9" height="30.3" fill="#ffffff"/>
<rect x="971.4" y="997.0" width="28.5" height="28.9" fill="#b0b0b0"/>
<rect x="971.4" y="997.0" width="26.8" height="27.2" fill="#f0f0f0"/>
<path d="M979.7 1007.9h14.4l-7.2 7.6z" fill="#000"/>
<rect x="12.0" y="1079.2" width="1020.0" height="1.4" fill="#a0a0a0"/>
<text transform="translate(38.0,1131.0)" font-size="21.33" fill="#000" textLength="110.0" lengthAdjust="spacingAndGlyphs" font-weight="bold">Parameter</text>
<rect x="186.1" y="1111.1" width="23.7" height="23.7" rx="4.5" fill="#f6f6f6" stroke="#5f5f5f" stroke-width="1.4"/>
<text transform="translate(217.6,1131.0)" font-size="21.33" fill="#000" textLength="104.8" lengthAdjust="spacingAndGlyphs">verwenden</text>
<rect x="344.8" y="1100" width="179.8" height="43.8" rx="4" fill="#f8f8f8" stroke="#ececec" stroke-width="1"/>
<text transform="translate(352.0,1129.8)" font-size="21.33" fill="#8c8c8c" textLength="129.4" lengthAdjust="spacingAndGlyphs">Einstellungen</text>
<path d="M487.4 1109.2h24l5.6 5.6v21.4h-29.6z" fill="#fbfbfb" stroke="#929292" stroke-width="2"/>
<rect x="491.0" y="1117.0" width="24.0" height="16.4" fill="#9a9a9a"/>
<rect x="492.6" y="1119.0" width="3.6" height="2.4" fill="#f4f4f4"/>
<rect x="492.6" y="1123.4" width="3.6" height="2.4" fill="#f4f4f4"/>
<rect x="492.6" y="1127.8" width="3.6" height="2.4" fill="#f4f4f4"/>
<rect x="498.8" y="1119.0" width="3.6" height="2.4" fill="#f4f4f4"/>
<rect x="498.8" y="1123.4" width="3.6" height="2.4" fill="#f4f4f4"/>
<rect x="498.8" y="1127.8" width="3.6" height="2.4" fill="#f4f4f4"/>
<rect x="505.0" y="1119.0" width="3.6" height="2.4" fill="#f4f4f4"/>
<rect x="505.0" y="1123.4" width="3.6" height="2.4" fill="#f4f4f4"/>
<rect x="505.0" y="1127.8" width="3.6" height="2.4" fill="#f4f4f4"/>
<rect x="511.2" y="1119.0" width="3.6" height="2.4" fill="#f4f4f4"/>
<rect x="511.2" y="1123.4" width="3.6" height="2.4" fill="#f4f4f4"/>
<rect x="511.2" y="1127.8" width="3.6" height="2.4" fill="#f4f4f4"/>
<path d="M494 1117v-5.4l4 3l4-4l4.4 5l4-3.6v5" stroke="#929292" stroke-width="2" fill="#fbfbfb"/>
<rect x="12.0" y="1160.2" width="1020.0" height="1.2" fill="#dadada"/>
<rect x="12.0" y="1161.4" width="1020.0" height="1.2" fill="#fbfbfb"/>
<text transform="translate(37.5,1210.7)" font-size="21.33" fill="#000" textLength="265.0" lengthAdjust="spacingAndGlyphs" font-weight="bold">Verzeichnis ("Erzeugen")</text>
<rect x="344.0" y="1187.0" width="664.0" height="31.6" fill="#fff"/>
<rect x="344.0" y="1218.4" width="664.0" height="1.2" fill="#7a7a7a"/>
<rect x="966.2" y="1188.0" width="41.8" height="30.4" fill="#858585"/>
<rect x="966.2" y="1188.0" width="40.2" height="28.8" fill="#ffffff"/>
<rect x="967.5" y="1189.3" width="38.9" height="27.5" fill="#f0f0f0"/>
<path d="M975.9 1214.2V1201.4l1.8-1.8h5.8v2.2h11v3.8" stroke="#000" stroke-width="1.8" fill="#fff"/>
<path d="M976.4 1214.2l6.4-8.6h17.8l-5.8 8.6z" fill="#868686" stroke="#000" stroke-width="1.7"/>
<path d="M985.6 1194q2.8-3.2 6-2.6q3.2 0.4 5 3.2" stroke="#000" stroke-width="1.7" fill="none"/>
<path d="M998.9 1193v5.6h-5.8z" fill="#000"/>
<rect x="12.0" y="1231.0" width="1020.0" height="1.2" fill="#b4b4b4"/>
<rect x="12.0" y="1232.2" width="1020.0" height="1.0" fill="#fafafa"/>
</g>
<g id="ov">
<rect x="723" y="916.1" width="289.1" height="120.6" fill="none" stroke="#ff067c" stroke-width="10"/>
<rect x="2472" y="4.6" width="329.4" height="92.2" fill="none" stroke="#ff067c" stroke-width="10"/>
<path d="M1020.4 919.6L2431.1 131.0L2438.2 143.8L2466.2 102.5L2416.3 104.7L2423.5 117.5L1012.8 906.0Z" fill="#ff067c"/>
<circle cx="1016.6" cy="912.8" r="7.75" fill="#ff067c"/>
</g>
</svg>
</body></html>
